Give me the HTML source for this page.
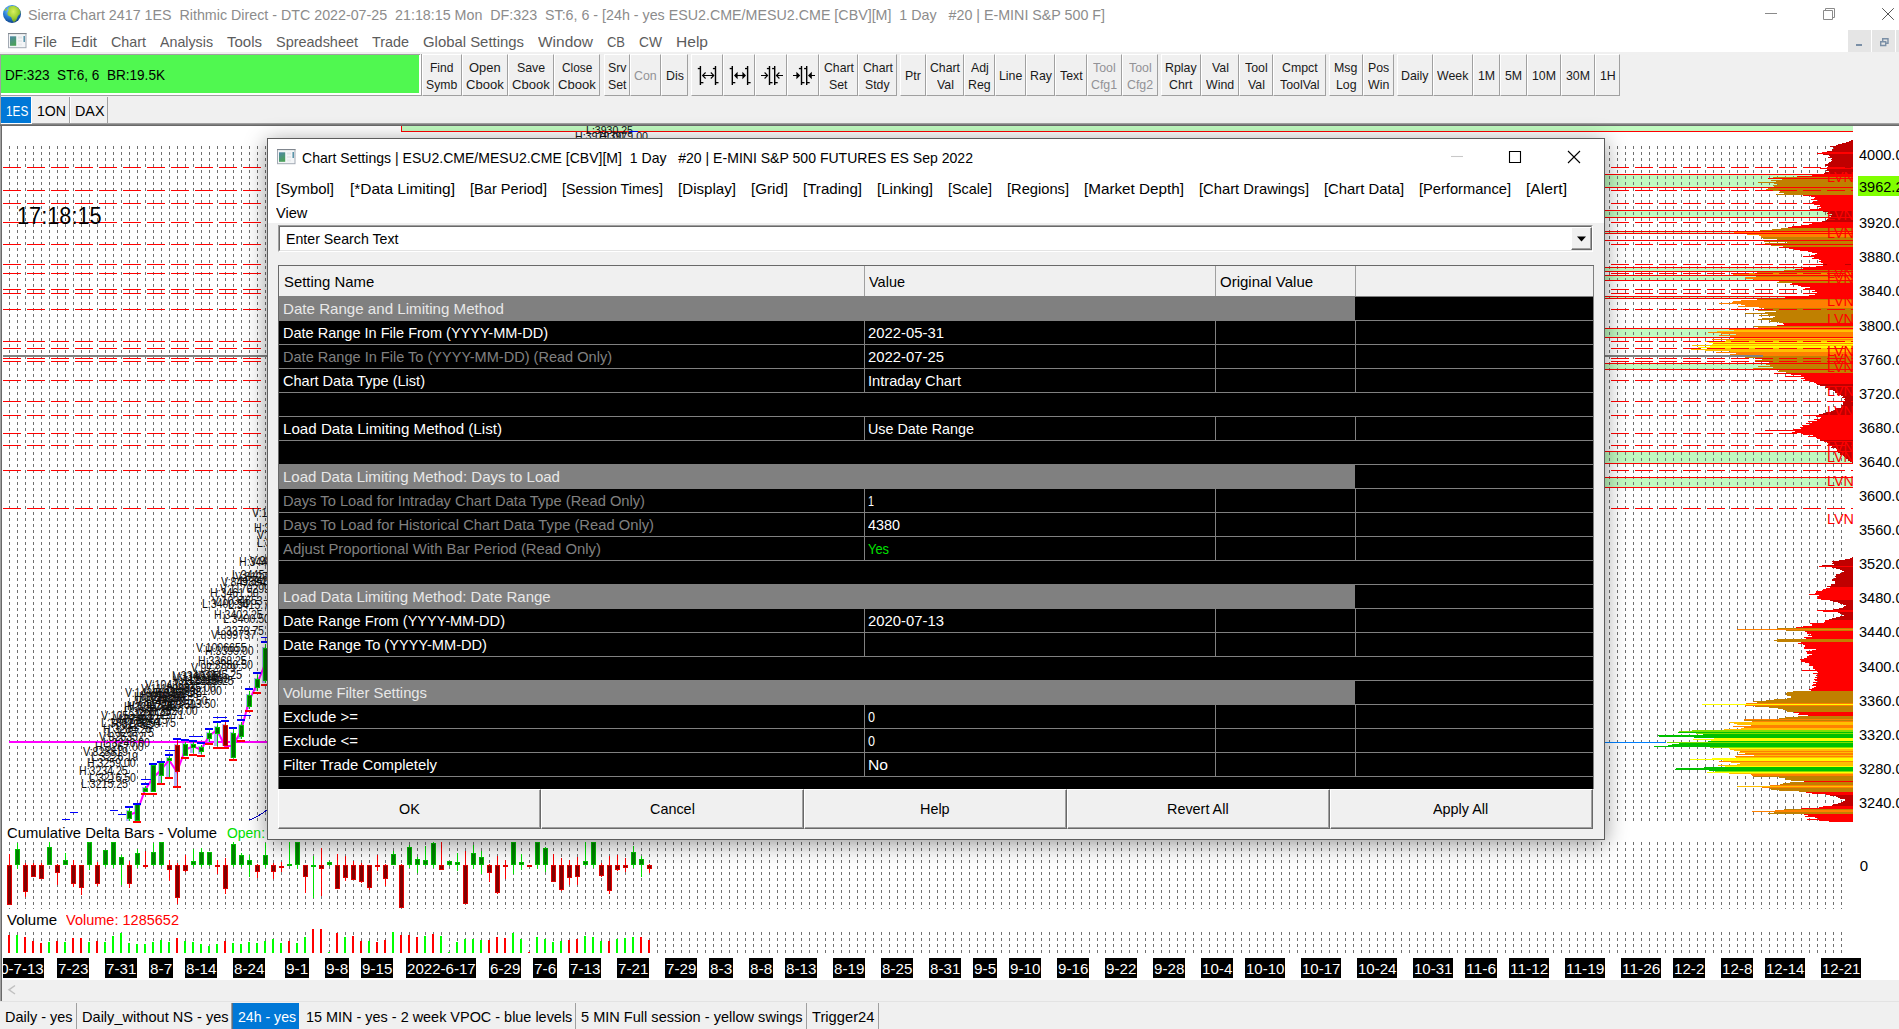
<!DOCTYPE html>
<html><head><meta charset="utf-8"><title>Sierra Chart</title>
<style>
html,body{margin:0;padding:0;}
body{width:1899px;height:1029px;overflow:hidden;position:relative;background:#fff;font-family:"Liberation Sans",sans-serif;}
div,span.t,svg{position:absolute;}
span.t{white-space:pre;line-height:1;transform-origin:0 0;}
.btn{background:#f0f0f0;border-left:1px solid #fff;border-top:1px solid #fff;border-right:1px solid #a0a0a0;border-bottom:1px solid #a0a0a0;box-sizing:border-box;}
</style></head><body>
<div style="left:0px;top:0px;width:1899px;height:27px;background:#fff;"></div>
<svg style="left:2px;top:4px" width="20" height="20" viewBox="0 0 20 20"><defs><radialGradient id="gl" cx="40%" cy="30%" r="75%"><stop offset="0" stop-color="#8fd0ff"/><stop offset="0.5" stop-color="#2a80d8"/><stop offset="1" stop-color="#0c3c80"/></radialGradient><radialGradient id="gl2" cx="45%" cy="35%" r="70%"><stop offset="0" stop-color="#d8f060"/><stop offset="0.6" stop-color="#9ccc30"/><stop offset="1" stop-color="#5a9020"/></radialGradient><clipPath id="gc"><circle cx="10" cy="10" r="9"/></clipPath></defs><circle cx="10" cy="10" r="9" fill="url(#gl)"/><g clip-path="url(#gc)"><path d="M7 3 C9 1.5 13 1.5 15 3 C17 4 19 7 18.5 9 C18 11 16 11 15.5 13 C15 15 14 17.5 12 18 C10.5 18 10 15.5 9.5 14 C9 12 6 12.5 5.5 10.5 C5 8.5 6 8 6.5 6.5 C6.8 5.5 6 4 7 3Z" fill="url(#gl2)"/><path d="M3 5 C4 4 5 4.5 5 5.5 C4.8 6.5 3.5 7 2.5 6.5Z" fill="#9ccc30"/></g></svg>
<span class="t" style="left:27.80px;top:7px;font-size:15px;color:#8c8c8c;transform:scaleX(0.9511);">Sierra Chart 2417 1ES  Rithmic Direct - DTC 2022-07-25  21:18:15 Mon  DF:323  ST:6, 6 - [24h - yes ESU2.CME/MESU2.CME [CBV][M]  1 Day   #20 | E-MINI S&amp;P 500 F]</span>
<svg style="left:1750px;top:0" width="149" height="27" viewBox="0 0 149 27"><g stroke="#8a8a8a" stroke-width="1" fill="none"><path d="M15 13.5H27"/><path d="M73.5 10.5h9v9h-9z"/><path d="M75.5 10.5v-2h9v9h-2"/><path d="M132.2 8.2L143.8 19.8M143.8 8.2L132.2 19.8" stroke="#555" stroke-width="1"/></g></svg>
<div style="left:0px;top:27px;width:1899px;height:25px;background:#fff;"></div>
<svg style="left:8px;top:33px" width="19" height="16" viewBox="0 0 19 16"><defs><linearGradient id="wia" x1="0" y1="0" x2="0.4" y2="1"><stop offset="0" stop-color="#4f86a8"/><stop offset="1" stop-color="#4ba05a"/></linearGradient></defs><rect x="0.5" y="0.5" width="17.5" height="14.2" fill="#f3f5f7" stroke="#a3aab4"/><rect x="0" y="0" width="18.5" height="1.1" fill="#80868e"/><rect x="2" y="3.3" width="6.2" height="9.5" fill="url(#wia)"/><rect x="10" y="3.5" width="4" height="2" fill="#e2e5e8"/><rect x="10" y="7" width="4" height="2" fill="#e6e8ea"/><rect x="10" y="10.5" width="4" height="2" fill="#e9ebed"/><rect x="15.5" y="3" width="1.4" height="6" fill="#4a8aa0"/></svg>
<span class="t" style="left:34.00px;top:34px;font-size:15px;color:#5c5c5c;transform:scaleX(0.9515);">File</span>
<span class="t" style="left:71.00px;top:34px;font-size:15px;color:#5c5c5c;transform:scaleX(1.0059);">Edit</span>
<span class="t" style="left:111.00px;top:34px;font-size:15px;color:#5c5c5c;transform:scaleX(0.9542);">Chart</span>
<span class="t" style="left:160.00px;top:34px;font-size:15px;color:#5c5c5c;transform:scaleX(0.9489);">Analysis</span>
<span class="t" style="left:227.00px;top:34px;font-size:15px;color:#5c5c5c;">Tools</span>
<span class="t" style="left:276.00px;top:34px;font-size:15px;color:#5c5c5c;transform:scaleX(0.9640);">Spreadsheet</span>
<span class="t" style="left:372.00px;top:34px;font-size:15px;color:#5c5c5c;transform:scaleX(0.9578);">Trade</span>
<span class="t" style="left:423.00px;top:34px;font-size:15px;color:#5c5c5c;transform:scaleX(0.9928);">Global Settings</span>
<span class="t" style="left:538.00px;top:34px;font-size:15px;color:#5c5c5c;transform:scaleX(1.0309);">Window</span>
<span class="t" style="left:607.00px;top:34px;font-size:15px;color:#5c5c5c;transform:scaleX(0.8638);">CB</span>
<span class="t" style="left:639.00px;top:34px;font-size:15px;color:#5c5c5c;transform:scaleX(0.9204);">CW</span>
<span class="t" style="left:676.00px;top:34px;font-size:15px;color:#5c5c5c;transform:scaleX(1.0373);">Help</span>
<div style="left:1848px;top:30px;width:23px;height:23px;background:#e5e5e5;"></div>
<div style="left:1872px;top:30px;width:23px;height:23px;background:#e5e5e5;"></div>
<div style="left:1896px;top:30px;width:3px;height:23px;background:#e5e5e5;"></div>
<svg style="left:1848px;top:30px" width="51" height="23" viewBox="0 0 51 23"><g fill="#7a8fa6"><rect x="8" y="14" width="6" height="2"/></g><g stroke="#7a8fa6" stroke-width="1.4" fill="none"><path d="M32.7 11.7h5v3.8h-5z"/><path d="M34.7 11.5v-2.8h5.3v4.6h-2"/></g></svg>
<div style="left:0px;top:52px;width:1899px;height:73px;background:#f0f0f0;"></div>
<div style="left:0px;top:54px;width:420px;height:1px;background:#a0a0a0;"></div>
<div style="left:0px;top:54px;width:1px;height:42px;background:#a0a0a0;"></div>
<div style="left:1px;top:55px;width:418px;height:38px;background:#50f850;"></div>
<div style="left:1px;top:93px;width:419px;height:2px;background:#fff;"></div>
<div style="left:419px;top:55px;width:2px;height:40px;background:#fff;"></div>
<div style="left:0px;top:95px;width:421px;height:1px;background:#a0a0a0;"></div>
<div style="left:421px;top:54px;width:1px;height:42px;background:#a0a0a0;"></div>
<span class="t" style="left:5.00px;top:67px;font-size:15px;color:#000;transform:scaleX(0.9052);">DF:323  ST:6, 6  BR:19.5K</span>
<div class="btn" style="left:422px;top:54px;width:40px;height:42px"></div>
<span class="t" style="left:430.30px;top:61px;font-size:13px;color:#1a1a1a;transform:scaleX(0.9253);">Find</span>
<span class="t" style="left:426.40px;top:78px;font-size:13px;color:#1a1a1a;transform:scaleX(0.9389);">Symb</span>
<div class="btn" style="left:462px;top:54px;width:46px;height:42px"></div>
<span class="t" style="left:469.20px;top:61px;font-size:13px;color:#1a1a1a;transform:scaleX(0.9936);">Open</span>
<span class="t" style="left:466.10px;top:78px;font-size:13px;color:#1a1a1a;transform:scaleX(1.0059);">Cbook</span>
<div class="btn" style="left:508px;top:54px;width:46px;height:42px"></div>
<span class="t" style="left:516.92px;top:61px;font-size:13px;color:#1a1a1a;transform:scaleX(0.9500);">Save</span>
<span class="t" style="left:512.10px;top:78px;font-size:13px;color:#1a1a1a;transform:scaleX(1.0059);">Cbook</span>
<div class="btn" style="left:554px;top:54px;width:46px;height:42px"></div>
<span class="t" style="left:561.85px;top:61px;font-size:13px;color:#1a1a1a;transform:scaleX(0.9116);">Close</span>
<span class="t" style="left:558.10px;top:78px;font-size:13px;color:#1a1a1a;transform:scaleX(1.0059);">Cbook</span>
<div class="btn" style="left:604px;top:54px;width:26px;height:42px"></div>
<span class="t" style="left:607.74px;top:61px;font-size:13px;color:#1a1a1a;transform:scaleX(0.9500);">Srv</span>
<span class="t" style="left:607.73px;top:78px;font-size:13px;color:#1a1a1a;transform:scaleX(0.9500);">Set</span>
<div class="btn" style="left:630px;top:54px;width:31px;height:42px"></div>
<span class="t" style="left:634.17px;top:69px;font-size:13px;color:#929296;transform:scaleX(0.9500);">Con</span>
<div class="btn" style="left:661px;top:54px;width:27px;height:42px"></div>
<span class="t" style="left:665.58px;top:69px;font-size:13px;color:#1a1a1a;transform:scaleX(0.9500);">Dis</span>
<div class="btn" style="left:691px;top:54px;width:32px;height:42px"></div>
<div class="btn" style="left:723px;top:54px;width:32px;height:42px"></div>
<div class="btn" style="left:755px;top:54px;width:32px;height:42px"></div>
<div class="btn" style="left:787px;top:54px;width:32px;height:42px"></div>
<div class="btn" style="left:819px;top:54px;width:39px;height:42px"></div>
<span class="t" style="left:823.50px;top:61px;font-size:13px;color:#1a1a1a;transform:scaleX(0.9437);">Chart</span>
<span class="t" style="left:829.23px;top:78px;font-size:13px;color:#1a1a1a;transform:scaleX(0.9500);">Set</span>
<div class="btn" style="left:858px;top:54px;width:39px;height:42px"></div>
<span class="t" style="left:862.50px;top:61px;font-size:13px;color:#1a1a1a;transform:scaleX(0.9437);">Chart</span>
<span class="t" style="left:865.25px;top:78px;font-size:13px;color:#1a1a1a;transform:scaleX(0.9418);">Stdy</span>
<div class="btn" style="left:900px;top:54px;width:26px;height:42px"></div>
<span class="t" style="left:905.11px;top:69px;font-size:13px;color:#1a1a1a;transform:scaleX(0.9500);">Ptr</span>
<div class="btn" style="left:926px;top:54px;width:38px;height:42px"></div>
<span class="t" style="left:930.00px;top:61px;font-size:13px;color:#1a1a1a;transform:scaleX(0.9437);">Chart</span>
<span class="t" style="left:936.53px;top:78px;font-size:13px;color:#1a1a1a;transform:scaleX(0.9500);">Val</span>
<div class="btn" style="left:964px;top:54px;width:31px;height:42px"></div>
<span class="t" style="left:970.57px;top:61px;font-size:13px;color:#1a1a1a;transform:scaleX(0.9500);">Adj</span>
<span class="t" style="left:968.17px;top:78px;font-size:13px;color:#1a1a1a;transform:scaleX(0.9500);">Reg</span>
<div class="btn" style="left:995px;top:54px;width:31px;height:42px"></div>
<span class="t" style="left:998.82px;top:69px;font-size:13px;color:#1a1a1a;transform:scaleX(0.9500);">Line</span>
<div class="btn" style="left:1026px;top:54px;width:29px;height:42px"></div>
<span class="t" style="left:1029.52px;top:69px;font-size:13px;color:#1a1a1a;transform:scaleX(0.9500);">Ray</span>
<div class="btn" style="left:1055px;top:54px;width:32px;height:42px"></div>
<span class="t" style="left:1059.68px;top:69px;font-size:13px;color:#1a1a1a;transform:scaleX(0.9500);">Text</span>
<div class="btn" style="left:1087px;top:54px;width:35px;height:42px"></div>
<span class="t" style="left:1093.17px;top:61px;font-size:13px;color:#929296;transform:scaleX(0.9500);">Tool</span>
<span class="t" style="left:1091.46px;top:78px;font-size:13px;color:#929296;transform:scaleX(0.9500);">Cfg1</span>
<div class="btn" style="left:1122px;top:54px;width:36px;height:42px"></div>
<span class="t" style="left:1128.67px;top:61px;font-size:13px;color:#929296;transform:scaleX(0.9500);">Tool</span>
<span class="t" style="left:1126.96px;top:78px;font-size:13px;color:#929296;transform:scaleX(0.9500);">Cfg2</span>
<div class="btn" style="left:1161px;top:54px;width:40px;height:42px"></div>
<span class="t" style="left:1165.21px;top:61px;font-size:13px;color:#1a1a1a;transform:scaleX(0.9500);">Rplay</span>
<span class="t" style="left:1169.33px;top:78px;font-size:13px;color:#1a1a1a;transform:scaleX(0.9500);">Chrt</span>
<div class="btn" style="left:1201px;top:54px;width:38px;height:42px"></div>
<span class="t" style="left:1211.53px;top:61px;font-size:13px;color:#1a1a1a;transform:scaleX(0.9500);">Val</span>
<span class="t" style="left:1205.93px;top:78px;font-size:13px;color:#1a1a1a;transform:scaleX(0.9500);">Wind</span>
<div class="btn" style="left:1239px;top:54px;width:34px;height:42px"></div>
<span class="t" style="left:1244.67px;top:61px;font-size:13px;color:#1a1a1a;transform:scaleX(0.9500);">Tool</span>
<span class="t" style="left:1247.53px;top:78px;font-size:13px;color:#1a1a1a;transform:scaleX(0.9500);">Val</span>
<div class="btn" style="left:1273px;top:54px;width:53px;height:42px"></div>
<span class="t" style="left:1281.66px;top:61px;font-size:13px;color:#1a1a1a;transform:scaleX(0.9500);">Cmpct</span>
<span class="t" style="left:1279.70px;top:78px;font-size:13px;color:#1a1a1a;transform:scaleX(0.9500);">ToolVal</span>
<div class="btn" style="left:1329px;top:54px;width:34px;height:42px"></div>
<span class="t" style="left:1334.33px;top:61px;font-size:13px;color:#1a1a1a;transform:scaleX(0.9500);">Msg</span>
<span class="t" style="left:1335.70px;top:78px;font-size:13px;color:#1a1a1a;transform:scaleX(0.9500);">Log</span>
<div class="btn" style="left:1363px;top:54px;width:31px;height:42px"></div>
<span class="t" style="left:1367.86px;top:61px;font-size:13px;color:#1a1a1a;transform:scaleX(0.9500);">Pos</span>
<span class="t" style="left:1367.87px;top:78px;font-size:13px;color:#1a1a1a;transform:scaleX(0.9500);">Win</span>
<div class="btn" style="left:1397px;top:54px;width:36px;height:42px"></div>
<span class="t" style="left:1401.27px;top:69px;font-size:13px;color:#1a1a1a;transform:scaleX(0.9500);">Daily</span>
<div class="btn" style="left:1433px;top:54px;width:40px;height:42px"></div>
<span class="t" style="left:1437.33px;top:69px;font-size:13px;color:#1a1a1a;transform:scaleX(0.9500);">Week</span>
<div class="btn" style="left:1473px;top:54px;width:27px;height:42px"></div>
<span class="t" style="left:1477.92px;top:69px;font-size:13px;color:#1a1a1a;transform:scaleX(0.9500);">1M</span>
<div class="btn" style="left:1500px;top:54px;width:27px;height:42px"></div>
<span class="t" style="left:1504.92px;top:69px;font-size:13px;color:#1a1a1a;transform:scaleX(0.9500);">5M</span>
<div class="btn" style="left:1527px;top:54px;width:34px;height:42px"></div>
<span class="t" style="left:1531.99px;top:69px;font-size:13px;color:#1a1a1a;transform:scaleX(0.9500);">10M</span>
<div class="btn" style="left:1561px;top:54px;width:34px;height:42px"></div>
<span class="t" style="left:1565.99px;top:69px;font-size:13px;color:#1a1a1a;transform:scaleX(0.9500);">30M</span>
<div class="btn" style="left:1595px;top:54px;width:25px;height:42px"></div>
<span class="t" style="left:1599.61px;top:69px;font-size:13px;color:#1a1a1a;transform:scaleX(0.9500);">1H</span>
<svg style="left:0;top:0" width="1899" height="100" viewBox="0 0 1899 100"><g fill="#000" stroke="none"><rect x="699.70" y="66" width="1.4" height="19"/><rect x="697.80" y="67.9" width="2.6" height="1.3"/><rect x="700.40" y="82" width="3" height="1.3"/><rect x="714.80" y="66" width="1.4" height="19"/><rect x="712.90" y="67.9" width="2.6" height="1.3"/><rect x="715.50" y="82" width="3" height="1.3"/><rect x="731.60" y="66" width="1.4" height="19"/><rect x="729.70" y="67.9" width="2.6" height="1.3"/><rect x="732.30" y="82" width="3" height="1.3"/><rect x="746.90" y="66" width="1.4" height="19"/><rect x="745.00" y="67.9" width="2.6" height="1.3"/><rect x="747.60" y="82" width="3" height="1.3"/><rect x="768.80" y="66" width="1.4" height="19"/><rect x="766.90" y="67.9" width="2.6" height="1.3"/><rect x="769.50" y="82" width="3" height="1.3"/><rect x="774.00" y="66" width="1.4" height="19"/><rect x="772.10" y="67.9" width="2.6" height="1.3"/><rect x="774.70" y="82" width="3" height="1.3"/><rect x="800.80" y="66" width="1.4" height="19"/><rect x="798.90" y="67.9" width="2.6" height="1.3"/><rect x="801.50" y="82" width="3" height="1.3"/><rect x="806.00" y="66" width="1.4" height="19"/><rect x="804.10" y="67.9" width="2.6" height="1.3"/><rect x="806.70" y="82" width="3" height="1.3"/></g><g stroke="#000" stroke-width="1.1" fill="none"><path d="M702.6 75.5H713.8M705.6 72.5l-3 3 3 3M710.8 72.5l3 3-3 3"/><path d="M736 75.5H744"/><path d="M761 75.5H767.6M764.6 72.5l3 3-3 3"/><path d="M776.4 75.5H783M779.4 72.5l-3 3 3 3"/><path d="M793 75.5H797M811 75.5H815"/></g><g fill="#000"><path d="M734 75.5l3.6-3.8v7.6zM746 75.5l-3.6-3.8v7.6z"/><path d="M800.2 75.5l-3.8-3.8v7.6zM808 75.5l3.8-3.8v7.6z"/></g></svg>
<div style="left:0px;top:96px;width:1px;height:30px;background:#a0a0a0;"></div>
<div style="left:1px;top:97px;width:30px;height:26px;background:#0078d7;"></div>
<span class="t" style="left:5.50px;top:103px;font-size:15.5px;color:#fff;transform:scaleX(0.7611);">1ES</span>
<div style="left:31px;top:97px;width:1px;height:26px;background:#fff;"></div>
<div style="left:32px;top:97px;width:38px;height:26px;background:#f0f0f0;border-right:1px solid #a0a0a0;box-sizing:border-box;"></div>
<span class="t" style="left:37.00px;top:103px;font-size:15.5px;color:#000;transform:scaleX(0.9099);">1ON</span>
<div style="left:70px;top:97px;width:1px;height:26px;background:#fff;"></div>
<div style="left:71px;top:97px;width:37px;height:26px;background:#f0f0f0;border-right:1px solid #a0a0a0;box-sizing:border-box;"></div>
<span class="t" style="left:74.50px;top:103px;font-size:15.5px;color:#000;transform:scaleX(0.9256);">DAX</span>
<div style="left:1px;top:123px;width:31px;height:1px;background:#fff;"></div>
<div style="left:32px;top:123px;width:1867px;height:1px;background:#a0a0a0;"></div>
<div style="left:0px;top:124px;width:1899px;height:1px;background:#808080;"></div>
<div style="left:0px;top:125px;width:1899px;height:1px;background:#696969;"></div>
<div style="left:0px;top:126px;width:1px;height:875px;background:#a0a0a0;"></div>
<div style="left:1px;top:126px;width:1px;height:855px;background:#696969;"></div>
<svg style="left:0;top:0" width="1899" height="1029" viewBox="0 0 1899 1029" shape-rendering="crispEdges"><defs><pattern id="vd" x="9" y="146" width="8" height="6" patternUnits="userSpaceOnUse"><rect x="0" y="0" width="1" height="3" fill="#707070"/></pattern><pattern id="hd" x="3" y="0" width="24" height="1" patternUnits="userSpaceOnUse"><rect x="0" y="0" width="18" height="1" fill="#ff0000"/></pattern></defs><rect x="401" y="126" width="1452" height="5" fill="#c0fac0"/><rect x="401" y="131" width="1452" height="1" fill="#f00"/><rect x="401" y="126" width="1" height="6" fill="#f00"/><rect x="900" y="175" width="953" height="12" fill="#c0fac0"/><rect x="900" y="211" width="953" height="6" fill="#c0fac0"/><rect x="900" y="232" width="953" height="1" fill="#c0fac0"/><rect x="900" y="268" width="953" height="3" fill="#c0fac0"/><rect x="900" y="276" width="953" height="4" fill="#c0fac0"/><rect x="900" y="297" width="953" height="1" fill="#c0fac0"/><rect x="900" y="329" width="953" height="8" fill="#c0fac0"/><rect x="900" y="364" width="953" height="5" fill="#c0fac0"/><rect x="900" y="452" width="953" height="11" fill="#c0fac0"/><rect x="900" y="478" width="953" height="9" fill="#c0fac0"/><rect x="9" y="146" width="1833" height="675" fill="url(#vd)"/><rect x="9" y="842" width="1833" height="67" fill="url(#vd)"/><rect x="9" y="932" width="1833" height="21" fill="url(#vd)"/><rect x="1851" y="140" width="2" height="1" fill="#c00000"/><rect x="1849" y="141" width="4" height="1" fill="#c00000"/><rect x="1846" y="142" width="7" height="1" fill="#c00000"/><rect x="1842" y="143" width="11" height="1" fill="#c00000"/><rect x="1838" y="144" width="15" height="1" fill="#c00000"/><rect x="1836" y="145" width="17" height="1" fill="#c00000"/><rect x="1830" y="146" width="23" height="1" fill="#c00000"/><rect x="1833" y="147" width="20" height="1" fill="#c00000"/><rect x="1834" y="148" width="19" height="1" fill="#c00000"/><rect x="1832" y="149" width="21" height="1" fill="#c00000"/><rect x="1832" y="150" width="21" height="1" fill="#c00000"/><rect x="1827" y="151" width="26" height="1" fill="#c00000"/><rect x="1822" y="152" width="31" height="1" fill="#ff0000"/><rect x="1817" y="153" width="36" height="1" fill="#ff0000"/><rect x="1823" y="154" width="30" height="1" fill="#c00000"/><rect x="1829" y="155" width="24" height="1" fill="#c00000"/><rect x="1830" y="156" width="23" height="1" fill="#c00000"/><rect x="1828" y="157" width="25" height="1" fill="#c00000"/><rect x="1832" y="158" width="21" height="1" fill="#c00000"/><rect x="1831" y="159" width="22" height="1" fill="#c00000"/><rect x="1832" y="160" width="21" height="1" fill="#c00000"/><rect x="1831" y="161" width="22" height="1" fill="#c00000"/><rect x="1829" y="162" width="24" height="1" fill="#c00000"/><rect x="1828" y="163" width="25" height="1" fill="#c00000"/><rect x="1825" y="164" width="28" height="1" fill="#c00000"/><rect x="1825" y="165" width="28" height="1" fill="#c00000"/><rect x="1828" y="166" width="25" height="1" fill="#c00000"/><rect x="1827" y="167" width="26" height="1" fill="#c00000"/><rect x="1820" y="168" width="33" height="1" fill="#ff0000"/><rect x="1827" y="169" width="26" height="1" fill="#c00000"/><rect x="1826" y="170" width="27" height="1" fill="#c00000"/><rect x="1829" y="171" width="24" height="1" fill="#c00000"/><rect x="1825" y="172" width="28" height="1" fill="#c00000"/><rect x="1824" y="173" width="29" height="1" fill="#c00000"/><rect x="1816" y="174" width="37" height="1" fill="#ff0000"/><rect x="1812" y="175" width="41" height="1" fill="#ff0000"/><rect x="1797" y="176" width="56" height="1" fill="#ff0000"/><rect x="1773" y="177" width="80" height="1" fill="#c08000"/><rect x="1768" y="178" width="85" height="1" fill="#ff0000"/><rect x="1782" y="179" width="71" height="1" fill="#c08000"/><rect x="1771" y="180" width="82" height="1" fill="#c08000"/><rect x="1776" y="181" width="77" height="1" fill="#c08000"/><rect x="1758" y="182" width="95" height="1" fill="#c08000"/><rect x="1774" y="183" width="79" height="1" fill="#c08000"/><rect x="1778" y="184" width="75" height="1" fill="#c08000"/><rect x="1773" y="185" width="80" height="1" fill="#c08000"/><rect x="1774" y="186" width="79" height="1" fill="#c08000"/><rect x="1765" y="187" width="88" height="1" fill="#c08000"/><rect x="1768" y="188" width="85" height="1" fill="#c08000"/><rect x="1766" y="189" width="87" height="1" fill="#c08000"/><rect x="1771" y="190" width="82" height="1" fill="#c08000"/><rect x="1780" y="191" width="73" height="1" fill="#c08000"/><rect x="1779" y="192" width="74" height="1" fill="#c08000"/><rect x="1784" y="193" width="69" height="1" fill="#c08000"/><rect x="1776" y="194" width="77" height="1" fill="#c08000"/><rect x="1803" y="195" width="50" height="1" fill="#ff0000"/><rect x="1811" y="196" width="42" height="1" fill="#ff0000"/><rect x="1815" y="197" width="38" height="1" fill="#ff0000"/><rect x="1814" y="198" width="39" height="1" fill="#ff0000"/><rect x="1811" y="199" width="42" height="1" fill="#ff0000"/><rect x="1818" y="200" width="35" height="1" fill="#ff0000"/><rect x="1813" y="201" width="40" height="1" fill="#ff0000"/><rect x="1812" y="202" width="41" height="1" fill="#ff0000"/><rect x="1817" y="203" width="36" height="1" fill="#ff0000"/><rect x="1814" y="204" width="39" height="1" fill="#ff0000"/><rect x="1820" y="205" width="33" height="1" fill="#ff0000"/><rect x="1817" y="206" width="36" height="1" fill="#ff0000"/><rect x="1821" y="207" width="32" height="1" fill="#ff0000"/><rect x="1819" y="208" width="34" height="1" fill="#ff0000"/><rect x="1810" y="209" width="43" height="1" fill="#ff0000"/><rect x="1821" y="210" width="32" height="1" fill="#c00000"/><rect x="1823" y="211" width="30" height="1" fill="#c00000"/><rect x="1828" y="212" width="25" height="1" fill="#c00000"/><rect x="1827" y="213" width="26" height="1" fill="#c00000"/><rect x="1832" y="214" width="21" height="1" fill="#c00000"/><rect x="1829" y="215" width="24" height="1" fill="#c00000"/><rect x="1831" y="216" width="22" height="1" fill="#c00000"/><rect x="1829" y="217" width="24" height="1" fill="#c00000"/><rect x="1829" y="218" width="24" height="1" fill="#c00000"/><rect x="1827" y="219" width="26" height="1" fill="#c00000"/><rect x="1826" y="220" width="27" height="1" fill="#c00000"/><rect x="1822" y="221" width="31" height="1" fill="#c00000"/><rect x="1816" y="222" width="37" height="1" fill="#ff0000"/><rect x="1812" y="223" width="41" height="1" fill="#ff0000"/><rect x="1809" y="224" width="44" height="1" fill="#ff0000"/><rect x="1801" y="225" width="52" height="1" fill="#ff0000"/><rect x="1792" y="226" width="61" height="1" fill="#ff0000"/><rect x="1788" y="227" width="65" height="1" fill="#ff0000"/><rect x="1781" y="228" width="72" height="1" fill="#c08000"/><rect x="1772" y="229" width="81" height="1" fill="#c08000"/><rect x="1760" y="230" width="93" height="1" fill="#c08000"/><rect x="1760" y="231" width="93" height="1" fill="#ff8000"/><rect x="1734" y="232" width="119" height="1" fill="#ff8000"/><rect x="1752" y="233" width="101" height="1" fill="#c08000"/><rect x="1747" y="234" width="106" height="1" fill="#ff8000"/><rect x="1759" y="235" width="94" height="1" fill="#ff8000"/><rect x="1761" y="236" width="92" height="1" fill="#ff8000"/><rect x="1761" y="237" width="92" height="1" fill="#c08000"/><rect x="1763" y="238" width="90" height="1" fill="#c08000"/><rect x="1777" y="239" width="76" height="1" fill="#c08000"/><rect x="1777" y="240" width="76" height="1" fill="#c08000"/><rect x="1764" y="241" width="89" height="1" fill="#c08000"/><rect x="1787" y="242" width="66" height="1" fill="#c08000"/><rect x="1765" y="243" width="88" height="1" fill="#c08000"/><rect x="1763" y="244" width="90" height="1" fill="#ff0000"/><rect x="1771" y="245" width="82" height="1" fill="#c08000"/><rect x="1783" y="246" width="70" height="1" fill="#c08000"/><rect x="1779" y="247" width="74" height="1" fill="#ff0000"/><rect x="1789" y="248" width="64" height="1" fill="#ff0000"/><rect x="1794" y="249" width="59" height="1" fill="#ff0000"/><rect x="1800" y="250" width="53" height="1" fill="#ff0000"/><rect x="1808" y="251" width="45" height="1" fill="#ff0000"/><rect x="1812" y="252" width="41" height="1" fill="#ff0000"/><rect x="1817" y="253" width="36" height="1" fill="#ff0000"/><rect x="1815" y="254" width="38" height="1" fill="#ff0000"/><rect x="1811" y="255" width="42" height="1" fill="#ff0000"/><rect x="1803" y="256" width="50" height="1" fill="#ff0000"/><rect x="1814" y="257" width="39" height="1" fill="#ff0000"/><rect x="1812" y="258" width="41" height="1" fill="#ff0000"/><rect x="1819" y="259" width="34" height="1" fill="#ff0000"/><rect x="1821" y="260" width="32" height="1" fill="#ff0000"/><rect x="1819" y="261" width="34" height="1" fill="#ff0000"/><rect x="1821" y="262" width="32" height="1" fill="#ff0000"/><rect x="1823" y="263" width="30" height="1" fill="#ff0000"/><rect x="1821" y="264" width="32" height="1" fill="#c00000"/><rect x="1823" y="265" width="30" height="1" fill="#ff0000"/><rect x="1816" y="266" width="37" height="1" fill="#ff0000"/><rect x="1803" y="267" width="50" height="1" fill="#ff0000"/><rect x="1803" y="268" width="50" height="1" fill="#ff0000"/><rect x="1795" y="269" width="58" height="1" fill="#ff0000"/><rect x="1784" y="270" width="69" height="1" fill="#c08000"/><rect x="1765" y="271" width="88" height="1" fill="#c08000"/><rect x="1757" y="272" width="96" height="1" fill="#c08000"/><rect x="1743" y="273" width="110" height="1" fill="#ff8000"/><rect x="1733" y="274" width="120" height="1" fill="#ff8000"/><rect x="1728" y="275" width="125" height="1" fill="#ff8000"/><rect x="1756" y="276" width="97" height="1" fill="#c08000"/><rect x="1745" y="277" width="108" height="1" fill="#ff8000"/><rect x="1746" y="278" width="107" height="1" fill="#ff8000"/><rect x="1754" y="279" width="99" height="1" fill="#ff8000"/><rect x="1768" y="280" width="85" height="1" fill="#c08000"/><rect x="1779" y="281" width="74" height="1" fill="#c08000"/><rect x="1777" y="282" width="76" height="1" fill="#c08000"/><rect x="1792" y="283" width="61" height="1" fill="#ff0000"/><rect x="1790" y="284" width="63" height="1" fill="#ff0000"/><rect x="1798" y="285" width="55" height="1" fill="#ff0000"/><rect x="1801" y="286" width="52" height="1" fill="#ff0000"/><rect x="1810" y="287" width="43" height="1" fill="#ff0000"/><rect x="1805" y="288" width="48" height="1" fill="#ff0000"/><rect x="1808" y="289" width="45" height="1" fill="#ff0000"/><rect x="1815" y="290" width="38" height="1" fill="#ff0000"/><rect x="1812" y="291" width="41" height="1" fill="#ff0000"/><rect x="1817" y="292" width="36" height="1" fill="#ff0000"/><rect x="1819" y="293" width="34" height="1" fill="#ff0000"/><rect x="1815" y="294" width="38" height="1" fill="#ff0000"/><rect x="1809" y="295" width="44" height="1" fill="#ff0000"/><rect x="1798" y="296" width="55" height="1" fill="#ff0000"/><rect x="1785" y="297" width="68" height="1" fill="#ff0000"/><rect x="1761" y="298" width="92" height="1" fill="#c08000"/><rect x="1757" y="299" width="96" height="1" fill="#c08000"/><rect x="1741" y="300" width="112" height="1" fill="#ff8000"/><rect x="1733" y="301" width="120" height="1" fill="#ff8000"/><rect x="1732" y="302" width="121" height="1" fill="#ff8000"/><rect x="1719" y="303" width="134" height="1" fill="#ff8000"/><rect x="1741" y="304" width="112" height="1" fill="#ff8000"/><rect x="1745" y="305" width="108" height="1" fill="#ff8000"/><rect x="1738" y="306" width="115" height="1" fill="#ff8000"/><rect x="1759" y="307" width="94" height="1" fill="#ff8000"/><rect x="1764" y="308" width="89" height="1" fill="#c08000"/><rect x="1755" y="309" width="98" height="1" fill="#c08000"/><rect x="1758" y="310" width="95" height="1" fill="#c08000"/><rect x="1776" y="311" width="77" height="1" fill="#c08000"/><rect x="1765" y="312" width="88" height="1" fill="#c08000"/><rect x="1745" y="313" width="108" height="1" fill="#c08000"/><rect x="1768" y="314" width="85" height="1" fill="#c08000"/><rect x="1759" y="315" width="94" height="1" fill="#c08000"/><rect x="1775" y="316" width="78" height="1" fill="#c08000"/><rect x="1773" y="317" width="80" height="1" fill="#c08000"/><rect x="1762" y="318" width="91" height="1" fill="#c08000"/><rect x="1758" y="319" width="95" height="1" fill="#c08000"/><rect x="1771" y="320" width="82" height="1" fill="#c08000"/><rect x="1769" y="321" width="84" height="1" fill="#c08000"/><rect x="1779" y="322" width="74" height="1" fill="#c08000"/><rect x="1783" y="323" width="70" height="1" fill="#ff0000"/><rect x="1784" y="324" width="69" height="1" fill="#ff0000"/><rect x="1777" y="325" width="76" height="1" fill="#ff0000"/><rect x="1754" y="326" width="99" height="1" fill="#c08000"/><rect x="1758" y="327" width="95" height="1" fill="#ff8000"/><rect x="1743" y="328" width="110" height="1" fill="#ff8000"/><rect x="1729" y="329" width="124" height="1" fill="#ff8000"/><rect x="1734" y="330" width="119" height="1" fill="#ffc000"/><rect x="1717" y="331" width="136" height="1" fill="#ffc000"/><rect x="1708" y="332" width="145" height="1" fill="#ff8000"/><rect x="1721" y="333" width="132" height="1" fill="#ff8000"/><rect x="1736" y="334" width="117" height="1" fill="#ff8000"/><rect x="1719" y="335" width="134" height="1" fill="#ff8000"/><rect x="1730" y="336" width="123" height="1" fill="#ff8000"/><rect x="1720" y="337" width="133" height="1" fill="#ffc000"/><rect x="1734" y="338" width="119" height="1" fill="#ffc000"/><rect x="1712" y="339" width="141" height="1" fill="#ff8000"/><rect x="1726" y="340" width="127" height="1" fill="#ffc000"/><rect x="1705" y="341" width="148" height="1" fill="#ffc000"/><rect x="1709" y="342" width="144" height="1" fill="#ffff00"/><rect x="1713" y="343" width="140" height="1" fill="#ff8000"/><rect x="1712" y="344" width="141" height="1" fill="#ffff00"/><rect x="1692" y="345" width="161" height="1" fill="#ffc000"/><rect x="1710" y="346" width="143" height="1" fill="#ffff00"/><rect x="1698" y="347" width="155" height="1" fill="#ffff00"/><rect x="1707" y="348" width="146" height="1" fill="#ffc000"/><rect x="1691" y="349" width="162" height="1" fill="#ffc000"/><rect x="1705" y="350" width="148" height="1" fill="#ffc000"/><rect x="1730" y="351" width="123" height="1" fill="#ffc000"/><rect x="1716" y="352" width="137" height="1" fill="#ff8000"/><rect x="1736" y="353" width="117" height="1" fill="#ff8000"/><rect x="1730" y="354" width="123" height="1" fill="#ff8000"/><rect x="1737" y="355" width="116" height="1" fill="#ff8000"/><rect x="1752" y="356" width="101" height="1" fill="#c08000"/><rect x="1745" y="357" width="108" height="1" fill="#c08000"/><rect x="1768" y="358" width="85" height="1" fill="#c08000"/><rect x="1762" y="359" width="91" height="1" fill="#c08000"/><rect x="1755" y="360" width="98" height="1" fill="#c08000"/><rect x="1769" y="361" width="84" height="1" fill="#c08000"/><rect x="1770" y="362" width="83" height="1" fill="#c08000"/><rect x="1764" y="363" width="89" height="1" fill="#c08000"/><rect x="1766" y="364" width="87" height="1" fill="#c08000"/><rect x="1770" y="365" width="83" height="1" fill="#c08000"/><rect x="1758" y="366" width="95" height="1" fill="#c08000"/><rect x="1773" y="367" width="80" height="1" fill="#c08000"/><rect x="1753" y="368" width="100" height="1" fill="#c08000"/><rect x="1761" y="369" width="92" height="1" fill="#c08000"/><rect x="1779" y="370" width="74" height="1" fill="#c08000"/><rect x="1778" y="371" width="75" height="1" fill="#c08000"/><rect x="1786" y="372" width="67" height="1" fill="#c08000"/><rect x="1774" y="373" width="79" height="1" fill="#ff0000"/><rect x="1791" y="374" width="62" height="1" fill="#ff0000"/><rect x="1801" y="375" width="52" height="1" fill="#ff0000"/><rect x="1785" y="376" width="68" height="1" fill="#ff0000"/><rect x="1804" y="377" width="49" height="1" fill="#ff0000"/><rect x="1801" y="378" width="52" height="1" fill="#ff0000"/><rect x="1805" y="379" width="48" height="1" fill="#ff0000"/><rect x="1804" y="380" width="49" height="1" fill="#ff0000"/><rect x="1810" y="381" width="43" height="1" fill="#ff0000"/><rect x="1814" y="382" width="39" height="1" fill="#ff0000"/><rect x="1816" y="383" width="37" height="1" fill="#ff0000"/><rect x="1817" y="384" width="36" height="1" fill="#c00000"/><rect x="1820" y="385" width="33" height="1" fill="#c00000"/><rect x="1826" y="386" width="27" height="1" fill="#ff0000"/><rect x="1825" y="387" width="28" height="1" fill="#c00000"/><rect x="1829" y="388" width="24" height="1" fill="#c00000"/><rect x="1828" y="389" width="25" height="1" fill="#c00000"/><rect x="1833" y="390" width="20" height="1" fill="#c00000"/><rect x="1835" y="391" width="18" height="1" fill="#c00000"/><rect x="1835" y="392" width="18" height="1" fill="#c00000"/><rect x="1838" y="393" width="15" height="1" fill="#c00000"/><rect x="1837" y="394" width="16" height="1" fill="#c00000"/><rect x="1841" y="395" width="12" height="1" fill="#c00000"/><rect x="1843" y="396" width="10" height="1" fill="#c00000"/><rect x="1842" y="397" width="11" height="1" fill="#c00000"/><rect x="1845" y="398" width="8" height="1" fill="#c00000"/><rect x="1844" y="399" width="9" height="1" fill="#c00000"/><rect x="1845" y="400" width="8" height="1" fill="#c00000"/><rect x="1844" y="401" width="9" height="1" fill="#c00000"/><rect x="1843" y="402" width="10" height="1" fill="#c00000"/><rect x="1843" y="403" width="10" height="1" fill="#c00000"/><rect x="1843" y="404" width="10" height="1" fill="#c00000"/><rect x="1841" y="405" width="12" height="1" fill="#c00000"/><rect x="1842" y="406" width="11" height="1" fill="#c00000"/><rect x="1841" y="407" width="12" height="1" fill="#c00000"/><rect x="1835" y="408" width="18" height="1" fill="#c00000"/><rect x="1835" y="409" width="18" height="1" fill="#c00000"/><rect x="1834" y="410" width="19" height="1" fill="#c00000"/><rect x="1831" y="411" width="22" height="1" fill="#c00000"/><rect x="1826" y="412" width="27" height="1" fill="#c00000"/><rect x="1823" y="413" width="30" height="1" fill="#c00000"/><rect x="1819" y="414" width="34" height="1" fill="#c00000"/><rect x="1814" y="415" width="39" height="1" fill="#ff0000"/><rect x="1816" y="416" width="37" height="1" fill="#ff0000"/><rect x="1821" y="417" width="32" height="1" fill="#ff0000"/><rect x="1820" y="418" width="33" height="1" fill="#ff0000"/><rect x="1814" y="419" width="39" height="1" fill="#ff0000"/><rect x="1817" y="420" width="36" height="1" fill="#ff0000"/><rect x="1808" y="421" width="45" height="1" fill="#ff0000"/><rect x="1812" y="422" width="41" height="1" fill="#ff0000"/><rect x="1806" y="423" width="47" height="1" fill="#ff0000"/><rect x="1810" y="424" width="43" height="1" fill="#ff0000"/><rect x="1802" y="425" width="51" height="1" fill="#ff0000"/><rect x="1803" y="426" width="50" height="1" fill="#ff0000"/><rect x="1800" y="427" width="53" height="1" fill="#ff0000"/><rect x="1801" y="428" width="52" height="1" fill="#ff0000"/><rect x="1793" y="429" width="60" height="1" fill="#ff0000"/><rect x="1765" y="430" width="88" height="1" fill="#ff0000"/><rect x="1795" y="431" width="58" height="1" fill="#ff0000"/><rect x="1792" y="432" width="61" height="1" fill="#ff0000"/><rect x="1801" y="433" width="52" height="1" fill="#ff0000"/><rect x="1803" y="434" width="50" height="1" fill="#ff0000"/><rect x="1813" y="435" width="40" height="1" fill="#ff0000"/><rect x="1808" y="436" width="45" height="1" fill="#ff0000"/><rect x="1816" y="437" width="37" height="1" fill="#ff0000"/><rect x="1817" y="438" width="36" height="1" fill="#ff0000"/><rect x="1820" y="439" width="33" height="1" fill="#ff0000"/><rect x="1820" y="440" width="33" height="1" fill="#c00000"/><rect x="1824" y="441" width="29" height="1" fill="#ff0000"/><rect x="1827" y="442" width="26" height="1" fill="#c00000"/><rect x="1829" y="443" width="24" height="1" fill="#c00000"/><rect x="1828" y="444" width="25" height="1" fill="#c00000"/><rect x="1831" y="445" width="22" height="1" fill="#c00000"/><rect x="1832" y="446" width="21" height="1" fill="#c00000"/><rect x="1831" y="447" width="22" height="1" fill="#c00000"/><rect x="1836" y="448" width="17" height="1" fill="#c00000"/><rect x="1837" y="449" width="16" height="1" fill="#c00000"/><rect x="1837" y="450" width="16" height="1" fill="#c00000"/><rect x="1839" y="451" width="14" height="1" fill="#c00000"/><rect x="1838" y="452" width="15" height="1" fill="#c00000"/><rect x="1840" y="453" width="13" height="1" fill="#c00000"/><rect x="1840" y="454" width="13" height="1" fill="#c00000"/><rect x="1843" y="455" width="10" height="1" fill="#c00000"/><rect x="1844" y="456" width="9" height="1" fill="#c00000"/><rect x="1845" y="457" width="8" height="1" fill="#c00000"/><rect x="1846" y="458" width="7" height="1" fill="#c00000"/><rect x="1848" y="459" width="5" height="1" fill="#c00000"/><rect x="1848" y="460" width="5" height="1" fill="#c00000"/><rect x="1850" y="461" width="3" height="1" fill="#c00000"/><rect x="1852" y="462" width="1" height="1" fill="#c00000"/><rect x="1852" y="557" width="1" height="1" fill="#c00000"/><rect x="1850" y="558" width="3" height="1" fill="#c00000"/><rect x="1845" y="559" width="8" height="1" fill="#c00000"/><rect x="1839" y="560" width="14" height="1" fill="#c00000"/><rect x="1832" y="561" width="21" height="1" fill="#c00000"/><rect x="1833" y="562" width="20" height="1" fill="#c00000"/><rect x="1832" y="563" width="21" height="1" fill="#c00000"/><rect x="1834" y="564" width="19" height="1" fill="#c00000"/><rect x="1822" y="565" width="31" height="1" fill="#c00000"/><rect x="1819" y="566" width="34" height="1" fill="#ff0000"/><rect x="1832" y="567" width="21" height="1" fill="#c00000"/><rect x="1836" y="568" width="17" height="1" fill="#c00000"/><rect x="1840" y="569" width="13" height="1" fill="#c00000"/><rect x="1842" y="570" width="11" height="1" fill="#c00000"/><rect x="1844" y="571" width="9" height="1" fill="#c00000"/><rect x="1842" y="572" width="11" height="1" fill="#c00000"/><rect x="1840" y="573" width="13" height="1" fill="#c00000"/><rect x="1836" y="574" width="17" height="1" fill="#c00000"/><rect x="1836" y="575" width="17" height="1" fill="#c00000"/><rect x="1835" y="576" width="18" height="1" fill="#c00000"/><rect x="1836" y="577" width="17" height="1" fill="#c00000"/><rect x="1834" y="578" width="19" height="1" fill="#c00000"/><rect x="1832" y="579" width="21" height="1" fill="#c00000"/><rect x="1832" y="580" width="21" height="1" fill="#c00000"/><rect x="1835" y="581" width="18" height="1" fill="#c00000"/><rect x="1835" y="582" width="18" height="1" fill="#c00000"/><rect x="1835" y="583" width="18" height="1" fill="#c00000"/><rect x="1831" y="584" width="22" height="1" fill="#c00000"/><rect x="1831" y="585" width="22" height="1" fill="#c00000"/><rect x="1827" y="586" width="26" height="1" fill="#c00000"/><rect x="1830" y="587" width="23" height="1" fill="#ff0000"/><rect x="1826" y="588" width="27" height="1" fill="#ff0000"/><rect x="1823" y="589" width="30" height="1" fill="#ff0000"/><rect x="1822" y="590" width="31" height="1" fill="#ff0000"/><rect x="1816" y="591" width="37" height="1" fill="#ff0000"/><rect x="1816" y="592" width="37" height="1" fill="#ff0000"/><rect x="1815" y="593" width="38" height="1" fill="#ff0000"/><rect x="1809" y="594" width="44" height="1" fill="#ff0000"/><rect x="1819" y="595" width="34" height="1" fill="#ff0000"/><rect x="1817" y="596" width="36" height="1" fill="#ff0000"/><rect x="1818" y="597" width="35" height="1" fill="#ff0000"/><rect x="1817" y="598" width="36" height="1" fill="#ff0000"/><rect x="1821" y="599" width="32" height="1" fill="#ff0000"/><rect x="1830" y="600" width="23" height="1" fill="#c00000"/><rect x="1833" y="601" width="20" height="1" fill="#c00000"/><rect x="1838" y="602" width="15" height="1" fill="#c00000"/><rect x="1840" y="603" width="13" height="1" fill="#c00000"/><rect x="1843" y="604" width="10" height="1" fill="#c00000"/><rect x="1846" y="605" width="7" height="1" fill="#c00000"/><rect x="1844" y="606" width="9" height="1" fill="#c00000"/><rect x="1843" y="607" width="10" height="1" fill="#c00000"/><rect x="1839" y="608" width="14" height="1" fill="#c00000"/><rect x="1833" y="609" width="20" height="1" fill="#c00000"/><rect x="1817" y="610" width="36" height="1" fill="#ff0000"/><rect x="1823" y="611" width="30" height="1" fill="#ff0000"/><rect x="1838" y="612" width="15" height="1" fill="#c00000"/><rect x="1840" y="613" width="13" height="1" fill="#c00000"/><rect x="1842" y="614" width="11" height="1" fill="#c00000"/><rect x="1844" y="615" width="9" height="1" fill="#c00000"/><rect x="1840" y="616" width="13" height="1" fill="#c00000"/><rect x="1836" y="617" width="17" height="1" fill="#c00000"/><rect x="1832" y="618" width="21" height="1" fill="#c00000"/><rect x="1829" y="619" width="24" height="1" fill="#c00000"/><rect x="1825" y="620" width="28" height="1" fill="#ff0000"/><rect x="1825" y="621" width="28" height="1" fill="#ff0000"/><rect x="1824" y="622" width="29" height="1" fill="#ff0000"/><rect x="1810" y="623" width="43" height="1" fill="#ff0000"/><rect x="1812" y="624" width="41" height="1" fill="#ff0000"/><rect x="1812" y="625" width="41" height="1" fill="#ff0000"/><rect x="1803" y="626" width="50" height="1" fill="#ff0000"/><rect x="1796" y="627" width="57" height="1" fill="#ff0000"/><rect x="1777" y="628" width="76" height="1" fill="#c08000"/><rect x="1737" y="629" width="116" height="1" fill="#ff8000"/><rect x="1786" y="630" width="67" height="1" fill="#c08000"/><rect x="1805" y="631" width="48" height="1" fill="#ff0000"/><rect x="1807" y="632" width="46" height="1" fill="#ff0000"/><rect x="1807" y="633" width="46" height="1" fill="#ff0000"/><rect x="1811" y="634" width="42" height="1" fill="#ff0000"/><rect x="1808" y="635" width="45" height="1" fill="#ff0000"/><rect x="1812" y="636" width="41" height="1" fill="#ff0000"/><rect x="1804" y="637" width="49" height="1" fill="#ff0000"/><rect x="1806" y="638" width="47" height="1" fill="#ff0000"/><rect x="1777" y="639" width="76" height="1" fill="#c08000"/><rect x="1774" y="640" width="79" height="1" fill="#c08000"/><rect x="1777" y="641" width="76" height="1" fill="#c08000"/><rect x="1801" y="642" width="52" height="1" fill="#ff0000"/><rect x="1798" y="643" width="55" height="1" fill="#ff0000"/><rect x="1803" y="644" width="50" height="1" fill="#ff0000"/><rect x="1805" y="645" width="48" height="1" fill="#ff0000"/><rect x="1805" y="646" width="48" height="1" fill="#ff0000"/><rect x="1804" y="647" width="49" height="1" fill="#ff0000"/><rect x="1804" y="648" width="49" height="1" fill="#ff0000"/><rect x="1816" y="649" width="37" height="1" fill="#ff0000"/><rect x="1812" y="650" width="41" height="1" fill="#ff0000"/><rect x="1806" y="651" width="47" height="1" fill="#ff0000"/><rect x="1807" y="652" width="46" height="1" fill="#ff0000"/><rect x="1807" y="653" width="46" height="1" fill="#ff0000"/><rect x="1812" y="654" width="41" height="1" fill="#ff0000"/><rect x="1809" y="655" width="44" height="1" fill="#ff0000"/><rect x="1807" y="656" width="46" height="1" fill="#ff0000"/><rect x="1807" y="657" width="46" height="1" fill="#ff0000"/><rect x="1804" y="658" width="49" height="1" fill="#ff0000"/><rect x="1800" y="659" width="53" height="1" fill="#ff0000"/><rect x="1801" y="660" width="52" height="1" fill="#ff0000"/><rect x="1801" y="661" width="52" height="1" fill="#ff0000"/><rect x="1805" y="662" width="48" height="1" fill="#ff0000"/><rect x="1809" y="663" width="44" height="1" fill="#ff0000"/><rect x="1810" y="664" width="43" height="1" fill="#ff0000"/><rect x="1809" y="665" width="44" height="1" fill="#ff0000"/><rect x="1813" y="666" width="40" height="1" fill="#ff0000"/><rect x="1813" y="667" width="40" height="1" fill="#ff0000"/><rect x="1813" y="668" width="40" height="1" fill="#ff0000"/><rect x="1815" y="669" width="38" height="1" fill="#ff0000"/><rect x="1802" y="670" width="51" height="1" fill="#ff0000"/><rect x="1817" y="671" width="36" height="1" fill="#ff0000"/><rect x="1818" y="672" width="35" height="1" fill="#ff0000"/><rect x="1813" y="673" width="40" height="1" fill="#ff0000"/><rect x="1818" y="674" width="35" height="1" fill="#ff0000"/><rect x="1816" y="675" width="37" height="1" fill="#ff0000"/><rect x="1818" y="676" width="35" height="1" fill="#ff0000"/><rect x="1815" y="677" width="38" height="1" fill="#ff0000"/><rect x="1817" y="678" width="36" height="1" fill="#ff0000"/><rect x="1814" y="679" width="39" height="1" fill="#ff0000"/><rect x="1815" y="680" width="38" height="1" fill="#ff0000"/><rect x="1818" y="681" width="35" height="1" fill="#ff0000"/><rect x="1813" y="682" width="40" height="1" fill="#ff0000"/><rect x="1816" y="683" width="37" height="1" fill="#ff0000"/><rect x="1813" y="684" width="40" height="1" fill="#ff0000"/><rect x="1812" y="685" width="41" height="1" fill="#ff0000"/><rect x="1816" y="686" width="37" height="1" fill="#ff0000"/><rect x="1814" y="687" width="39" height="1" fill="#ff0000"/><rect x="1812" y="688" width="41" height="1" fill="#ff0000"/><rect x="1809" y="689" width="44" height="1" fill="#ff0000"/><rect x="1811" y="690" width="42" height="1" fill="#ff0000"/><rect x="1793" y="691" width="60" height="1" fill="#c08000"/><rect x="1787" y="692" width="66" height="1" fill="#c08000"/><rect x="1786" y="693" width="67" height="1" fill="#c08000"/><rect x="1786" y="694" width="67" height="1" fill="#c08000"/><rect x="1787" y="695" width="66" height="1" fill="#c08000"/><rect x="1791" y="696" width="62" height="1" fill="#c08000"/><rect x="1791" y="697" width="62" height="1" fill="#c08000"/><rect x="1787" y="698" width="66" height="1" fill="#c08000"/><rect x="1774" y="699" width="79" height="1" fill="#c08000"/><rect x="1766" y="700" width="87" height="1" fill="#c08000"/><rect x="1753" y="701" width="100" height="1" fill="#c08000"/><rect x="1757" y="702" width="96" height="1" fill="#c08000"/><rect x="1746" y="703" width="107" height="1" fill="#ff8000"/><rect x="1702" y="704" width="151" height="1" fill="#ffff00"/><rect x="1745" y="705" width="108" height="1" fill="#ff8000"/><rect x="1755" y="706" width="98" height="1" fill="#c08000"/><rect x="1769" y="707" width="84" height="1" fill="#c08000"/><rect x="1778" y="708" width="75" height="1" fill="#c08000"/><rect x="1783" y="709" width="70" height="1" fill="#c08000"/><rect x="1786" y="710" width="67" height="1" fill="#c08000"/><rect x="1787" y="711" width="66" height="1" fill="#c08000"/><rect x="1794" y="712" width="59" height="1" fill="#ff0000"/><rect x="1799" y="713" width="54" height="1" fill="#ff0000"/><rect x="1798" y="714" width="55" height="1" fill="#ff0000"/><rect x="1808" y="715" width="45" height="1" fill="#ff0000"/><rect x="1798" y="716" width="55" height="1" fill="#c08000"/><rect x="1785" y="717" width="68" height="1" fill="#c08000"/><rect x="1779" y="718" width="74" height="1" fill="#c08000"/><rect x="1744" y="719" width="109" height="1" fill="#ff8000"/><rect x="1744" y="720" width="109" height="1" fill="#c08000"/><rect x="1752" y="721" width="101" height="1" fill="#ff8000"/><rect x="1729" y="722" width="124" height="1" fill="#ffc000"/><rect x="1734" y="723" width="119" height="1" fill="#ffc000"/><rect x="1737" y="724" width="116" height="1" fill="#ffc000"/><rect x="1751" y="725" width="102" height="1" fill="#ff8000"/><rect x="1733" y="726" width="120" height="1" fill="#ff8000"/><rect x="1744" y="727" width="109" height="1" fill="#ff8000"/><rect x="1741" y="728" width="112" height="1" fill="#ffc000"/><rect x="1724" y="729" width="129" height="1" fill="#ffc000"/><rect x="1692" y="730" width="161" height="1" fill="#80e000"/><rect x="1679" y="731" width="174" height="1" fill="#80e000"/><rect x="1678" y="732" width="175" height="1" fill="#00c000"/><rect x="1696" y="733" width="157" height="1" fill="#80e000"/><rect x="1703" y="734" width="150" height="1" fill="#00c000"/><rect x="1658" y="735" width="195" height="1" fill="#00c000"/><rect x="1659" y="736" width="194" height="1" fill="#00c000"/><rect x="1694" y="737" width="159" height="1" fill="#00c000"/><rect x="1714" y="738" width="139" height="1" fill="#ffff00"/><rect x="1693" y="739" width="160" height="1" fill="#ffff00"/><rect x="1711" y="740" width="142" height="1" fill="#ffff00"/><rect x="1708" y="741" width="145" height="1" fill="#00c000"/><rect x="1667" y="742" width="186" height="1" fill="#80e000"/><rect x="1679" y="743" width="174" height="1" fill="#00c000"/><rect x="1672" y="744" width="181" height="1" fill="#00c000"/><rect x="1668" y="745" width="185" height="1" fill="#00c000"/><rect x="1654" y="746" width="199" height="1" fill="#00c000"/><rect x="1710" y="747" width="143" height="1" fill="#80e000"/><rect x="1729" y="748" width="124" height="1" fill="#ffff00"/><rect x="1730" y="749" width="123" height="1" fill="#ffc000"/><rect x="1734" y="750" width="119" height="1" fill="#ffc000"/><rect x="1740" y="751" width="113" height="1" fill="#ff8000"/><rect x="1739" y="752" width="114" height="1" fill="#ffc000"/><rect x="1745" y="753" width="108" height="1" fill="#ff8000"/><rect x="1738" y="754" width="115" height="1" fill="#ff8000"/><rect x="1754" y="755" width="99" height="1" fill="#ffc000"/><rect x="1735" y="756" width="118" height="1" fill="#ff8000"/><rect x="1736" y="757" width="117" height="1" fill="#ffc000"/><rect x="1712" y="758" width="141" height="1" fill="#ffff00"/><rect x="1690" y="759" width="163" height="1" fill="#ffff00"/><rect x="1723" y="760" width="130" height="1" fill="#ffff00"/><rect x="1719" y="761" width="134" height="1" fill="#ff8000"/><rect x="1731" y="762" width="122" height="1" fill="#ffc000"/><rect x="1740" y="763" width="113" height="1" fill="#ffc000"/><rect x="1737" y="764" width="116" height="1" fill="#ffc000"/><rect x="1718" y="765" width="135" height="1" fill="#ffc000"/><rect x="1725" y="766" width="128" height="1" fill="#ffff00"/><rect x="1704" y="767" width="149" height="1" fill="#00c000"/><rect x="1676" y="768" width="177" height="1" fill="#00c000"/><rect x="1675" y="769" width="178" height="1" fill="#00c000"/><rect x="1709" y="770" width="144" height="1" fill="#00c000"/><rect x="1715" y="771" width="138" height="1" fill="#80e000"/><rect x="1707" y="772" width="146" height="1" fill="#ffff00"/><rect x="1729" y="773" width="124" height="1" fill="#ffc000"/><rect x="1751" y="774" width="102" height="1" fill="#ff8000"/><rect x="1752" y="775" width="101" height="1" fill="#ff8000"/><rect x="1753" y="776" width="100" height="1" fill="#c08000"/><rect x="1779" y="777" width="74" height="1" fill="#c08000"/><rect x="1786" y="778" width="67" height="1" fill="#c08000"/><rect x="1785" y="779" width="68" height="1" fill="#c08000"/><rect x="1791" y="780" width="62" height="1" fill="#c08000"/><rect x="1804" y="781" width="49" height="1" fill="#ff0000"/><rect x="1790" y="782" width="63" height="1" fill="#c08000"/><rect x="1783" y="783" width="70" height="1" fill="#c08000"/><rect x="1780" y="784" width="73" height="1" fill="#c08000"/><rect x="1770" y="785" width="83" height="1" fill="#ff8000"/><rect x="1737" y="786" width="116" height="1" fill="#ffc000"/><rect x="1762" y="787" width="91" height="1" fill="#ff8000"/><rect x="1770" y="788" width="83" height="1" fill="#c08000"/><rect x="1771" y="789" width="82" height="1" fill="#c08000"/><rect x="1779" y="790" width="74" height="1" fill="#c08000"/><rect x="1799" y="791" width="54" height="1" fill="#c08000"/><rect x="1806" y="792" width="47" height="1" fill="#ff0000"/><rect x="1812" y="793" width="41" height="1" fill="#ff0000"/><rect x="1826" y="794" width="27" height="1" fill="#ff0000"/><rect x="1830" y="795" width="23" height="1" fill="#c00000"/><rect x="1836" y="796" width="17" height="1" fill="#c00000"/><rect x="1838" y="797" width="15" height="1" fill="#c00000"/><rect x="1840" y="798" width="13" height="1" fill="#c00000"/><rect x="1845" y="799" width="8" height="1" fill="#c00000"/><rect x="1845" y="800" width="8" height="1" fill="#c00000"/><rect x="1843" y="801" width="10" height="1" fill="#c00000"/><rect x="1841" y="802" width="12" height="1" fill="#c00000"/><rect x="1838" y="803" width="15" height="1" fill="#c00000"/><rect x="1833" y="804" width="20" height="1" fill="#c00000"/><rect x="1832" y="805" width="21" height="1" fill="#c00000"/><rect x="1823" y="806" width="30" height="1" fill="#ff0000"/><rect x="1819" y="807" width="34" height="1" fill="#ff0000"/><rect x="1801" y="808" width="52" height="1" fill="#ff0000"/><rect x="1784" y="809" width="69" height="1" fill="#c08000"/><rect x="1775" y="810" width="78" height="1" fill="#ff8000"/><rect x="1752" y="811" width="101" height="1" fill="#ff8000"/><rect x="1774" y="812" width="79" height="1" fill="#c08000"/><rect x="1768" y="813" width="85" height="1" fill="#c08000"/><rect x="1804" y="814" width="49" height="1" fill="#ff0000"/><rect x="1808" y="815" width="45" height="1" fill="#ff0000"/><rect x="1805" y="816" width="48" height="1" fill="#ff0000"/><rect x="1815" y="817" width="38" height="1" fill="#ff0000"/><rect x="1818" y="818" width="35" height="1" fill="#ff0000"/><rect x="1807" y="819" width="46" height="1" fill="#ff0000"/><rect x="1819" y="820" width="34" height="1" fill="#ff0000"/><rect x="1829" y="821" width="24" height="1" fill="#ff0000"/><rect x="900" y="174" width="953" height="1" fill="#f00"/><rect x="900" y="187" width="953" height="1" fill="#f00"/><rect x="900" y="210" width="953" height="1" fill="#f00"/><rect x="900" y="217" width="953" height="1" fill="#f00"/><rect x="900" y="231" width="953" height="1" fill="#f00"/><rect x="900" y="233" width="953" height="1" fill="#f00"/><rect x="900" y="240" width="953" height="1" fill="#f00"/><rect x="900" y="267" width="953" height="1" fill="#f00"/><rect x="900" y="271" width="953" height="1" fill="#f00"/><rect x="900" y="275" width="953" height="1" fill="#f00"/><rect x="900" y="280" width="953" height="1" fill="#f00"/><rect x="900" y="296" width="953" height="1" fill="#f00"/><rect x="900" y="298" width="953" height="1" fill="#f00"/><rect x="900" y="328" width="953" height="1" fill="#f00"/><rect x="900" y="337" width="953" height="1" fill="#f00"/><rect x="900" y="363" width="953" height="1" fill="#f00"/><rect x="900" y="369" width="953" height="1" fill="#f00"/><rect x="900" y="451" width="953" height="1" fill="#f00"/><rect x="900" y="463" width="953" height="1" fill="#f00"/><rect x="900" y="477" width="953" height="1" fill="#f00"/><rect x="900" y="487" width="953" height="1" fill="#f00"/><rect x="3" y="167" width="1850" height="1" fill="url(#hd)"/><rect x="3" y="190" width="1850" height="1" fill="url(#hd)"/><rect x="3" y="203" width="1850" height="1" fill="url(#hd)"/><rect x="3" y="222" width="1850" height="1" fill="url(#hd)"/><rect x="3" y="244" width="1850" height="1" fill="url(#hd)"/><rect x="3" y="264" width="1850" height="1" fill="url(#hd)"/><rect x="3" y="273" width="1850" height="1" fill="url(#hd)"/><rect x="3" y="289" width="1850" height="1" fill="url(#hd)"/><rect x="3" y="293" width="1850" height="1" fill="url(#hd)"/><rect x="3" y="309" width="1850" height="1" fill="url(#hd)"/><rect x="3" y="341" width="1850" height="1" fill="url(#hd)"/><rect x="3" y="348" width="1850" height="1" fill="url(#hd)"/><rect x="3" y="358" width="1850" height="1" fill="url(#hd)"/><rect x="3" y="361" width="1850" height="1" fill="url(#hd)"/><rect x="3" y="380" width="1850" height="1" fill="url(#hd)"/><rect x="3" y="401" width="1850" height="1" fill="url(#hd)"/><rect x="3" y="415" width="1850" height="1" fill="url(#hd)"/><rect x="3" y="433" width="1850" height="1" fill="url(#hd)"/><rect x="3" y="445" width="1850" height="1" fill="url(#hd)"/><rect x="3" y="470" width="1850" height="1" fill="url(#hd)"/><rect x="3" y="508" width="1850" height="1" fill="url(#hd)"/><rect x="3" y="355" width="1760" height="2" fill="#808080"/><rect x="9" y="741" width="1595" height="2" fill="#ff00ff"/><rect x="1604" y="742" width="62" height="1" fill="#0080ff"/><rect x="126" y="810" width="3" height="11" fill="#b4b4f8"/><rect x="134" y="803" width="3" height="18" fill="#b4b4f8"/><rect x="142" y="787" width="3" height="5" fill="#b4b4f8"/><rect x="150" y="764" width="3" height="28" fill="#b4b4f8"/><rect x="158" y="762" width="3" height="21" fill="#b4b4f8"/><rect x="166" y="757" width="3" height="20" fill="#b4b4f8"/><rect x="174" y="744" width="3" height="42" fill="#b4b4f8"/><rect x="182" y="743" width="3" height="13" fill="#b4b4f8"/><rect x="190" y="743" width="3" height="10" fill="#b4b4f8"/><rect x="198" y="746" width="3" height="8" fill="#b4b4f8"/><rect x="206" y="732" width="3" height="10" fill="#b4b4f8"/><rect x="214" y="726" width="3" height="20" fill="#b4b4f8"/><rect x="222" y="724" width="3" height="22" fill="#b4b4f8"/><rect x="230" y="732" width="3" height="26" fill="#b4b4f8"/><rect x="238" y="724" width="3" height="15" fill="#b4b4f8"/><rect x="246" y="694" width="3" height="15" fill="#b4b4f8"/><rect x="254" y="678" width="3" height="13" fill="#b4b4f8"/><rect x="262" y="647" width="3" height="36" fill="#b4b4f8"/><polyline points="129,815 137,812 145,790 153,778 161,770 169,760 177,772 185,750 193,746 201,750 209,736 217,730 225,746 233,746 241,731 249,701 257,684 265,664" fill="none" stroke="#ff00ff" stroke-width="2" shape-rendering="auto"/><rect x="129" y="808" width="1" height="13" fill="#00c800"/><rect x="127" y="811" width="5" height="8" fill="#00c800"/><rect x="128" y="812" width="3" height="6" fill="#007000"/><rect x="125" y="806" width="8" height="2" fill="#0000ff"/><rect x="137" y="804" width="1" height="17" fill="#00c800"/><rect x="135" y="804" width="5" height="17" fill="#00c800"/><rect x="136" y="805" width="3" height="15" fill="#007000"/><rect x="133" y="803" width="8" height="2" fill="#0000ff"/><rect x="133" y="821" width="8" height="2" fill="#ff0000"/><rect x="145" y="786" width="1" height="6" fill="#00c800"/><rect x="143" y="788" width="5" height="4" fill="#00c800"/><rect x="144" y="789" width="3" height="2" fill="#007000"/><rect x="141" y="783" width="8" height="2" fill="#0000ff"/><rect x="141" y="779" width="14" height="1" fill="#0000ff"/><rect x="141" y="793" width="8" height="2" fill="#ff0000"/><rect x="153" y="765" width="1" height="27" fill="#00c800"/><rect x="151" y="765" width="5" height="27" fill="#00c800"/><rect x="152" y="766" width="3" height="25" fill="#007000"/><rect x="149" y="763" width="8" height="2" fill="#0000ff"/><rect x="149" y="793" width="8" height="2" fill="#ff0000"/><rect x="161" y="763" width="1" height="20" fill="#00c800"/><rect x="159" y="763" width="5" height="13" fill="#00c800"/><rect x="160" y="764" width="3" height="11" fill="#007000"/><rect x="157" y="761" width="8" height="2" fill="#0000ff"/><rect x="157" y="783" width="8" height="2" fill="#ff0000"/><rect x="169" y="756" width="1" height="21" fill="#00c800"/><rect x="167" y="758" width="5" height="3" fill="#00c800"/><rect x="168" y="759" width="3" height="1" fill="#007000"/><rect x="165" y="754" width="8" height="2" fill="#0000ff"/><rect x="165" y="750" width="14" height="1" fill="#0000ff"/><rect x="165" y="777" width="8" height="2" fill="#ff0000"/><rect x="177" y="740" width="1" height="46" fill="#e00000"/><rect x="175" y="745" width="5" height="27" fill="#e00000"/><rect x="176" y="746" width="3" height="25" fill="#800000"/><rect x="173" y="738" width="8" height="2" fill="#0000ff"/><rect x="173" y="786" width="8" height="2" fill="#ff0000"/><rect x="185" y="742" width="1" height="14" fill="#00c800"/><rect x="183" y="744" width="5" height="12" fill="#00c800"/><rect x="184" y="745" width="3" height="10" fill="#007000"/><rect x="181" y="739" width="8" height="2" fill="#0000ff"/><rect x="181" y="757" width="8" height="2" fill="#ff0000"/><rect x="193" y="742" width="1" height="11" fill="#00c800"/><rect x="191" y="744" width="5" height="4" fill="#00c800"/><rect x="192" y="745" width="3" height="2" fill="#007000"/><rect x="189" y="740" width="8" height="2" fill="#0000ff"/><rect x="189" y="736" width="14" height="1" fill="#0000ff"/><rect x="189" y="754" width="8" height="2" fill="#ff0000"/><rect x="201" y="745" width="1" height="9" fill="#00c800"/><rect x="199" y="747" width="5" height="5" fill="#00c800"/><rect x="200" y="748" width="3" height="3" fill="#007000"/><rect x="197" y="742" width="8" height="2" fill="#0000ff"/><rect x="197" y="755" width="8" height="2" fill="#ff0000"/><rect x="209" y="730" width="1" height="12" fill="#00c800"/><rect x="207" y="733" width="5" height="6" fill="#00c800"/><rect x="208" y="734" width="3" height="4" fill="#007000"/><rect x="205" y="728" width="8" height="2" fill="#0000ff"/><rect x="205" y="743" width="8" height="2" fill="#ff0000"/><rect x="217" y="723" width="1" height="23" fill="#00c800"/><rect x="215" y="727" width="5" height="7" fill="#00c800"/><rect x="216" y="728" width="3" height="5" fill="#007000"/><rect x="213" y="721" width="8" height="2" fill="#0000ff"/><rect x="213" y="717" width="14" height="1" fill="#0000ff"/><rect x="213" y="747" width="8" height="2" fill="#ff0000"/><rect x="225" y="722" width="1" height="24" fill="#e00000"/><rect x="223" y="725" width="5" height="21" fill="#e00000"/><rect x="224" y="726" width="3" height="19" fill="#800000"/><rect x="221" y="720" width="8" height="2" fill="#0000ff"/><rect x="221" y="747" width="8" height="2" fill="#ff0000"/><rect x="233" y="729" width="1" height="29" fill="#00c800"/><rect x="231" y="733" width="5" height="25" fill="#00c800"/><rect x="232" y="734" width="3" height="23" fill="#007000"/><rect x="229" y="727" width="8" height="2" fill="#0000ff"/><rect x="229" y="759" width="8" height="2" fill="#ff0000"/><rect x="241" y="722" width="1" height="17" fill="#00c800"/><rect x="239" y="725" width="5" height="12" fill="#00c800"/><rect x="240" y="726" width="3" height="10" fill="#007000"/><rect x="237" y="719" width="8" height="2" fill="#0000ff"/><rect x="237" y="715" width="14" height="1" fill="#0000ff"/><rect x="237" y="740" width="8" height="2" fill="#ff0000"/><rect x="249" y="691" width="1" height="18" fill="#00c800"/><rect x="247" y="695" width="5" height="12" fill="#00c800"/><rect x="248" y="696" width="3" height="10" fill="#007000"/><rect x="245" y="688" width="8" height="2" fill="#0000ff"/><rect x="245" y="710" width="8" height="2" fill="#ff0000"/><rect x="257" y="675" width="1" height="16" fill="#00c800"/><rect x="255" y="679" width="5" height="9" fill="#00c800"/><rect x="256" y="680" width="3" height="7" fill="#007000"/><rect x="253" y="672" width="8" height="2" fill="#0000ff"/><rect x="253" y="692" width="8" height="2" fill="#ff0000"/><rect x="265" y="644" width="1" height="39" fill="#00c800"/><rect x="263" y="648" width="5" height="33" fill="#00c800"/><rect x="264" y="649" width="3" height="31" fill="#007000"/><rect x="261" y="641" width="8" height="2" fill="#0000ff"/><rect x="261" y="637" width="14" height="1" fill="#0000ff"/><rect x="261" y="684" width="8" height="2" fill="#ff0000"/><rect x="62" y="819" width="8" height="1" fill="#00f"/><rect x="70" y="812" width="8" height="1" fill="#00f"/><rect x="110" y="810" width="8" height="1" fill="#00f"/><rect x="118" y="814" width="8" height="1" fill="#00f"/><path d="M249 820 Q258 817 267 810" stroke="#0000c0" fill="none" stroke-width="1"/><rect x="9" y="854" width="1" height="51" fill="#ff0000"/><rect x="7" y="865" width="5" height="40" fill="#e00000"/><rect x="8" y="866" width="3" height="38" fill="#800000"/><rect x="17" y="843" width="1" height="26" fill="#00e000"/><rect x="15" y="849" width="5" height="16" fill="#00c000"/><rect x="16" y="850" width="3" height="14" fill="#008000"/><rect x="25" y="863" width="1" height="34" fill="#ff0000"/><rect x="23" y="865" width="5" height="27" fill="#e00000"/><rect x="24" y="866" width="3" height="25" fill="#800000"/><rect x="33" y="863" width="1" height="14" fill="#ff0000"/><rect x="31" y="865" width="5" height="12" fill="#e00000"/><rect x="32" y="866" width="3" height="10" fill="#800000"/><rect x="41" y="863" width="1" height="16" fill="#ff0000"/><rect x="39" y="865" width="5" height="14" fill="#e00000"/><rect x="40" y="866" width="3" height="12" fill="#800000"/><rect x="49" y="842" width="1" height="23" fill="#00e000"/><rect x="47" y="847" width="5" height="18" fill="#00c000"/><rect x="48" y="848" width="3" height="16" fill="#008000"/><rect x="57" y="864" width="1" height="21" fill="#ff0000"/><rect x="55" y="865" width="5" height="8" fill="#e00000"/><rect x="56" y="866" width="3" height="6" fill="#800000"/><rect x="65" y="853" width="1" height="12" fill="#00e000"/><rect x="63" y="860" width="5" height="5" fill="#00c000"/><rect x="64" y="861" width="3" height="3" fill="#008000"/><rect x="73" y="860" width="1" height="27" fill="#ff0000"/><rect x="71" y="865" width="5" height="19" fill="#e00000"/><rect x="72" y="866" width="3" height="17" fill="#800000"/><rect x="81" y="865" width="1" height="30" fill="#ff0000"/><rect x="79" y="865" width="5" height="23" fill="#e00000"/><rect x="80" y="866" width="3" height="21" fill="#800000"/><rect x="89" y="842" width="1" height="28" fill="#00e000"/><rect x="87" y="842" width="5" height="23" fill="#00c000"/><rect x="88" y="843" width="3" height="21" fill="#008000"/><rect x="97" y="862" width="1" height="24" fill="#ff0000"/><rect x="95" y="865" width="5" height="19" fill="#e00000"/><rect x="96" y="866" width="3" height="17" fill="#800000"/><rect x="105" y="850" width="1" height="17" fill="#00e000"/><rect x="103" y="850" width="5" height="15" fill="#00c000"/><rect x="104" y="851" width="3" height="13" fill="#008000"/><rect x="113" y="842" width="1" height="26" fill="#00e000"/><rect x="111" y="842" width="5" height="23" fill="#00c000"/><rect x="112" y="843" width="3" height="21" fill="#008000"/><rect x="121" y="855" width="1" height="30" fill="#00e000"/><rect x="119" y="857" width="5" height="8" fill="#00c000"/><rect x="120" y="858" width="3" height="6" fill="#008000"/><rect x="129" y="861" width="1" height="27" fill="#ff0000"/><rect x="127" y="865" width="5" height="19" fill="#e00000"/><rect x="128" y="866" width="3" height="17" fill="#800000"/><rect x="137" y="849" width="1" height="19" fill="#00e000"/><rect x="135" y="853" width="5" height="12" fill="#00c000"/><rect x="136" y="854" width="3" height="10" fill="#008000"/><rect x="145" y="851" width="1" height="17" fill="#ff0000"/><rect x="143" y="865" width="5" height="2" fill="#e00000"/><rect x="153" y="843" width="1" height="23" fill="#00e000"/><rect x="151" y="852" width="5" height="13" fill="#00c000"/><rect x="152" y="853" width="3" height="11" fill="#008000"/><rect x="161" y="842" width="1" height="24" fill="#00e000"/><rect x="159" y="842" width="5" height="23" fill="#00c000"/><rect x="160" y="843" width="3" height="21" fill="#008000"/><rect x="169" y="860" width="1" height="21" fill="#ff0000"/><rect x="167" y="865" width="5" height="5" fill="#e00000"/><rect x="168" y="866" width="3" height="3" fill="#800000"/><rect x="177" y="863" width="1" height="41" fill="#ff0000"/><rect x="175" y="865" width="5" height="33" fill="#e00000"/><rect x="176" y="866" width="3" height="31" fill="#800000"/><rect x="185" y="855" width="1" height="17" fill="#ff0000"/><rect x="183" y="865" width="5" height="6" fill="#e00000"/><rect x="184" y="866" width="3" height="4" fill="#800000"/><rect x="193" y="849" width="1" height="18" fill="#00e000"/><rect x="191" y="861" width="5" height="4" fill="#00c000"/><rect x="192" y="862" width="3" height="2" fill="#008000"/><rect x="201" y="848" width="1" height="19" fill="#00e000"/><rect x="199" y="852" width="5" height="13" fill="#00c000"/><rect x="200" y="853" width="3" height="11" fill="#008000"/><rect x="209" y="852" width="1" height="14" fill="#00e000"/><rect x="207" y="852" width="5" height="13" fill="#00c000"/><rect x="208" y="853" width="3" height="11" fill="#008000"/><rect x="217" y="860" width="1" height="14" fill="#ff0000"/><rect x="215" y="865" width="5" height="2" fill="#e00000"/><rect x="225" y="858" width="1" height="36" fill="#ff0000"/><rect x="223" y="865" width="5" height="24" fill="#e00000"/><rect x="224" y="866" width="3" height="22" fill="#800000"/><rect x="233" y="842" width="1" height="25" fill="#00e000"/><rect x="231" y="844" width="5" height="21" fill="#00c000"/><rect x="232" y="845" width="3" height="19" fill="#008000"/><rect x="241" y="853" width="1" height="14" fill="#00e000"/><rect x="239" y="855" width="5" height="10" fill="#00c000"/><rect x="240" y="856" width="3" height="8" fill="#008000"/><rect x="249" y="855" width="1" height="22" fill="#00e000"/><rect x="247" y="860" width="5" height="5" fill="#00c000"/><rect x="248" y="861" width="3" height="3" fill="#008000"/><rect x="257" y="864" width="1" height="14" fill="#ff0000"/><rect x="255" y="865" width="5" height="7" fill="#e00000"/><rect x="256" y="866" width="3" height="5" fill="#800000"/><rect x="265" y="843" width="1" height="25" fill="#00e000"/><rect x="263" y="855" width="5" height="10" fill="#00c000"/><rect x="264" y="856" width="3" height="8" fill="#008000"/><rect x="273" y="863" width="1" height="16" fill="#ff0000"/><rect x="271" y="865" width="5" height="7" fill="#e00000"/><rect x="272" y="866" width="3" height="5" fill="#800000"/><rect x="281" y="862" width="1" height="10" fill="#ff0000"/><rect x="279" y="866" width="5" height="2" fill="#e00000"/><rect x="289" y="842" width="1" height="24" fill="#00e000"/><rect x="287" y="864" width="5" height="2" fill="#00c000"/><rect x="297" y="842" width="1" height="27" fill="#00e000"/><rect x="295" y="842" width="5" height="23" fill="#00c000"/><rect x="296" y="843" width="3" height="21" fill="#008000"/><rect x="305" y="865" width="1" height="28" fill="#ff0000"/><rect x="303" y="865" width="5" height="12" fill="#e00000"/><rect x="304" y="866" width="3" height="10" fill="#800000"/><rect x="313" y="856" width="1" height="42" fill="#00e000"/><rect x="311" y="865" width="5" height="2" fill="#00c000"/><rect x="321" y="848" width="1" height="48" fill="#ff0000"/><rect x="319" y="865" width="5" height="4" fill="#e00000"/><rect x="320" y="866" width="3" height="2" fill="#800000"/><rect x="329" y="861" width="1" height="5" fill="#00e000"/><rect x="327" y="862" width="5" height="3" fill="#00c000"/><rect x="328" y="863" width="3" height="1" fill="#008000"/><rect x="337" y="854" width="1" height="35" fill="#ff0000"/><rect x="335" y="865" width="5" height="24" fill="#e00000"/><rect x="336" y="866" width="3" height="22" fill="#800000"/><rect x="345" y="856" width="1" height="25" fill="#ff0000"/><rect x="343" y="865" width="5" height="13" fill="#e00000"/><rect x="344" y="866" width="3" height="11" fill="#800000"/><rect x="353" y="861" width="1" height="19" fill="#ff0000"/><rect x="351" y="865" width="5" height="15" fill="#e00000"/><rect x="352" y="866" width="3" height="13" fill="#800000"/><rect x="361" y="863" width="1" height="20" fill="#ff0000"/><rect x="359" y="865" width="5" height="17" fill="#e00000"/><rect x="360" y="866" width="3" height="15" fill="#800000"/><rect x="369" y="865" width="1" height="25" fill="#ff0000"/><rect x="367" y="865" width="5" height="23" fill="#e00000"/><rect x="368" y="866" width="3" height="21" fill="#800000"/><rect x="377" y="855" width="1" height="16" fill="#ff0000"/><rect x="375" y="865" width="5" height="2" fill="#e00000"/><rect x="385" y="864" width="1" height="22" fill="#ff0000"/><rect x="383" y="865" width="5" height="14" fill="#e00000"/><rect x="384" y="866" width="3" height="12" fill="#800000"/><rect x="393" y="851" width="1" height="14" fill="#00e000"/><rect x="391" y="854" width="5" height="11" fill="#00c000"/><rect x="392" y="855" width="3" height="9" fill="#008000"/><rect x="401" y="864" width="1" height="44" fill="#ff0000"/><rect x="399" y="865" width="5" height="43" fill="#e00000"/><rect x="400" y="866" width="3" height="41" fill="#800000"/><rect x="409" y="845" width="1" height="23" fill="#00e000"/><rect x="407" y="847" width="5" height="18" fill="#00c000"/><rect x="408" y="848" width="3" height="16" fill="#008000"/><rect x="417" y="857" width="1" height="16" fill="#00e000"/><rect x="415" y="859" width="5" height="6" fill="#00c000"/><rect x="416" y="860" width="3" height="4" fill="#008000"/><rect x="425" y="846" width="1" height="20" fill="#00e000"/><rect x="423" y="860" width="5" height="5" fill="#00c000"/><rect x="424" y="861" width="3" height="3" fill="#008000"/><rect x="433" y="842" width="1" height="26" fill="#00e000"/><rect x="431" y="843" width="5" height="22" fill="#00c000"/><rect x="432" y="844" width="3" height="20" fill="#008000"/><rect x="441" y="842" width="1" height="28" fill="#ff0000"/><rect x="439" y="865" width="5" height="5" fill="#e00000"/><rect x="440" y="866" width="3" height="3" fill="#800000"/><rect x="449" y="861" width="1" height="5" fill="#00e000"/><rect x="447" y="861" width="5" height="4" fill="#00c000"/><rect x="448" y="862" width="3" height="2" fill="#008000"/><rect x="457" y="853" width="1" height="18" fill="#00e000"/><rect x="455" y="862" width="5" height="3" fill="#00c000"/><rect x="456" y="863" width="3" height="1" fill="#008000"/><rect x="465" y="851" width="1" height="53" fill="#ff0000"/><rect x="463" y="865" width="5" height="39" fill="#e00000"/><rect x="464" y="866" width="3" height="37" fill="#800000"/><rect x="473" y="845" width="1" height="24" fill="#00e000"/><rect x="471" y="853" width="5" height="12" fill="#00c000"/><rect x="472" y="854" width="3" height="10" fill="#008000"/><rect x="481" y="851" width="1" height="23" fill="#00e000"/><rect x="479" y="857" width="5" height="8" fill="#00c000"/><rect x="480" y="858" width="3" height="6" fill="#008000"/><rect x="489" y="864" width="1" height="18" fill="#ff0000"/><rect x="487" y="865" width="5" height="8" fill="#e00000"/><rect x="488" y="866" width="3" height="6" fill="#800000"/><rect x="497" y="856" width="1" height="38" fill="#ff0000"/><rect x="495" y="865" width="5" height="28" fill="#e00000"/><rect x="496" y="866" width="3" height="26" fill="#800000"/><rect x="505" y="860" width="1" height="19" fill="#ff0000"/><rect x="503" y="865" width="5" height="2" fill="#e00000"/><rect x="513" y="842" width="1" height="32" fill="#00e000"/><rect x="511" y="842" width="5" height="23" fill="#00c000"/><rect x="512" y="843" width="3" height="21" fill="#008000"/><rect x="521" y="854" width="1" height="16" fill="#00e000"/><rect x="519" y="862" width="5" height="3" fill="#00c000"/><rect x="520" y="863" width="3" height="1" fill="#008000"/><rect x="529" y="865" width="1" height="2" fill="#ff0000"/><rect x="527" y="865" width="5" height="2" fill="#e00000"/><rect x="537" y="842" width="1" height="27" fill="#00e000"/><rect x="535" y="842" width="5" height="23" fill="#00c000"/><rect x="536" y="843" width="3" height="21" fill="#008000"/><rect x="545" y="847" width="1" height="25" fill="#00e000"/><rect x="543" y="848" width="5" height="17" fill="#00c000"/><rect x="544" y="849" width="3" height="15" fill="#008000"/><rect x="553" y="854" width="1" height="28" fill="#ff0000"/><rect x="551" y="865" width="5" height="17" fill="#e00000"/><rect x="552" y="866" width="3" height="15" fill="#800000"/><rect x="561" y="858" width="1" height="33" fill="#ff0000"/><rect x="559" y="865" width="5" height="25" fill="#e00000"/><rect x="560" y="866" width="3" height="23" fill="#800000"/><rect x="569" y="860" width="1" height="25" fill="#ff0000"/><rect x="567" y="865" width="5" height="13" fill="#e00000"/><rect x="568" y="866" width="3" height="11" fill="#800000"/><rect x="577" y="857" width="1" height="28" fill="#ff0000"/><rect x="575" y="865" width="5" height="12" fill="#e00000"/><rect x="576" y="866" width="3" height="10" fill="#800000"/><rect x="585" y="842" width="1" height="24" fill="#00e000"/><rect x="583" y="861" width="5" height="4" fill="#00c000"/><rect x="584" y="862" width="3" height="2" fill="#008000"/><rect x="593" y="842" width="1" height="26" fill="#00e000"/><rect x="591" y="842" width="5" height="23" fill="#00c000"/><rect x="592" y="843" width="3" height="21" fill="#008000"/><rect x="601" y="863" width="1" height="14" fill="#ff0000"/><rect x="599" y="865" width="5" height="11" fill="#e00000"/><rect x="600" y="866" width="3" height="9" fill="#800000"/><rect x="609" y="856" width="1" height="38" fill="#ff0000"/><rect x="607" y="865" width="5" height="26" fill="#e00000"/><rect x="608" y="866" width="3" height="24" fill="#800000"/><rect x="617" y="855" width="1" height="16" fill="#ff0000"/><rect x="615" y="865" width="5" height="5" fill="#e00000"/><rect x="616" y="866" width="3" height="3" fill="#800000"/><rect x="625" y="858" width="1" height="14" fill="#ff0000"/><rect x="623" y="865" width="5" height="3" fill="#e00000"/><rect x="624" y="866" width="3" height="1" fill="#800000"/><rect x="633" y="846" width="1" height="22" fill="#00e000"/><rect x="631" y="852" width="5" height="13" fill="#00c000"/><rect x="632" y="853" width="3" height="11" fill="#008000"/><rect x="641" y="856" width="1" height="21" fill="#00e000"/><rect x="639" y="859" width="5" height="6" fill="#00c000"/><rect x="640" y="860" width="3" height="4" fill="#008000"/><rect x="649" y="864" width="1" height="9" fill="#ff0000"/><rect x="647" y="865" width="5" height="4" fill="#e00000"/><rect x="648" y="866" width="3" height="2" fill="#800000"/><rect x="8" y="935" width="2" height="18" fill="#ff0000"/><rect x="16" y="935" width="2" height="18" fill="#00ff00"/><rect x="24" y="937" width="2" height="16" fill="#ff0000"/><rect x="32" y="941" width="2" height="12" fill="#ff0000"/><rect x="40" y="943" width="2" height="10" fill="#ff0000"/><rect x="48" y="942" width="2" height="11" fill="#00ff00"/><rect x="56" y="941" width="2" height="12" fill="#ff0000"/><rect x="64" y="942" width="2" height="11" fill="#00ff00"/><rect x="72" y="938" width="2" height="15" fill="#ff0000"/><rect x="80" y="938" width="2" height="15" fill="#ff0000"/><rect x="88" y="942" width="2" height="11" fill="#00ff00"/><rect x="96" y="941" width="2" height="12" fill="#ff0000"/><rect x="104" y="942" width="2" height="11" fill="#00ff00"/><rect x="112" y="936" width="2" height="17" fill="#00ff00"/><rect x="120" y="933" width="2" height="20" fill="#00ff00"/><rect x="128" y="943" width="2" height="10" fill="#00ff00"/><rect x="136" y="944" width="2" height="9" fill="#00ff00"/><rect x="144" y="944" width="2" height="9" fill="#00ff00"/><rect x="152" y="942" width="2" height="11" fill="#00ff00"/><rect x="160" y="940" width="2" height="13" fill="#00ff00"/><rect x="168" y="942" width="2" height="11" fill="#00ff00"/><rect x="176" y="938" width="2" height="15" fill="#ff0000"/><rect x="184" y="941" width="2" height="12" fill="#00ff00"/><rect x="192" y="942" width="2" height="11" fill="#00ff00"/><rect x="200" y="944" width="2" height="9" fill="#00ff00"/><rect x="208" y="946" width="2" height="7" fill="#00ff00"/><rect x="216" y="944" width="2" height="9" fill="#00ff00"/><rect x="224" y="941" width="2" height="12" fill="#ff0000"/><rect x="232" y="943" width="2" height="10" fill="#00ff00"/><rect x="240" y="944" width="2" height="9" fill="#00ff00"/><rect x="248" y="942" width="2" height="11" fill="#00ff00"/><rect x="256" y="943" width="2" height="10" fill="#00ff00"/><rect x="264" y="941" width="2" height="12" fill="#00ff00"/><rect x="272" y="939" width="2" height="14" fill="#00ff00"/><rect x="280" y="943" width="2" height="10" fill="#00ff00"/><rect x="288" y="941" width="2" height="12" fill="#ff0000"/><rect x="296" y="943" width="2" height="10" fill="#00ff00"/><rect x="304" y="937" width="2" height="16" fill="#00ff00"/><rect x="312" y="929" width="2" height="24" fill="#ff0000"/><rect x="320" y="929" width="2" height="24" fill="#ff0000"/><rect x="328" y="952" width="2" height="1" fill="#00ff00"/><rect x="336" y="933" width="2" height="20" fill="#ff0000"/><rect x="344" y="937" width="2" height="16" fill="#00ff00"/><rect x="352" y="936" width="2" height="17" fill="#ff0000"/><rect x="360" y="941" width="2" height="12" fill="#ff0000"/><rect x="368" y="941" width="2" height="12" fill="#00ff00"/><rect x="376" y="942" width="2" height="11" fill="#ff0000"/><rect x="384" y="940" width="2" height="13" fill="#ff0000"/><rect x="392" y="932" width="2" height="21" fill="#00ff00"/><rect x="400" y="935" width="2" height="18" fill="#ff0000"/><rect x="408" y="935" width="2" height="18" fill="#ff0000"/><rect x="416" y="937" width="2" height="16" fill="#ff0000"/><rect x="424" y="936" width="2" height="17" fill="#00ff00"/><rect x="432" y="934" width="2" height="19" fill="#ff0000"/><rect x="440" y="936" width="2" height="17" fill="#00ff00"/><rect x="448" y="952" width="2" height="1" fill="#00ff00"/><rect x="456" y="942" width="2" height="11" fill="#00ff00"/><rect x="464" y="939" width="2" height="14" fill="#00ff00"/><rect x="472" y="939" width="2" height="14" fill="#00ff00"/><rect x="480" y="940" width="2" height="13" fill="#00ff00"/><rect x="488" y="940" width="2" height="13" fill="#ff0000"/><rect x="496" y="937" width="2" height="16" fill="#ff0000"/><rect x="504" y="938" width="2" height="15" fill="#ff0000"/><rect x="512" y="933" width="2" height="20" fill="#00ff00"/><rect x="520" y="939" width="2" height="14" fill="#00ff00"/><rect x="528" y="952" width="2" height="1" fill="#ff0000"/><rect x="536" y="937" width="2" height="16" fill="#00ff00"/><rect x="544" y="939" width="2" height="14" fill="#00ff00"/><rect x="552" y="942" width="2" height="11" fill="#00ff00"/><rect x="560" y="941" width="2" height="12" fill="#00ff00"/><rect x="568" y="940" width="2" height="13" fill="#ff0000"/><rect x="576" y="939" width="2" height="14" fill="#ff0000"/><rect x="584" y="936" width="2" height="17" fill="#00ff00"/><rect x="592" y="937" width="2" height="16" fill="#00ff00"/><rect x="600" y="941" width="2" height="12" fill="#00ff00"/><rect x="608" y="941" width="2" height="12" fill="#ff0000"/><rect x="616" y="939" width="2" height="14" fill="#00ff00"/><rect x="624" y="938" width="2" height="15" fill="#00ff00"/><rect x="632" y="937" width="2" height="16" fill="#00ff00"/><rect x="640" y="937" width="2" height="16" fill="#ff0000"/><rect x="648" y="940" width="2" height="13" fill="#ff0000"/></svg>
<span class="t" style="left:1827.00px;top:169px;font-size:15px;color:#ff0000;transform:scaleX(0.9620);">LVN</span>
<span class="t" style="left:1827.00px;top:207px;font-size:15px;color:#ff0000;transform:scaleX(0.9620);">LVN</span>
<span class="t" style="left:1827.00px;top:225px;font-size:15px;color:#ff0000;transform:scaleX(0.9620);">LVN</span>
<span class="t" style="left:1827.00px;top:245px;font-size:15px;color:#ff0000;transform:scaleX(0.9620);">LVN</span>
<span class="t" style="left:1827.00px;top:265px;font-size:15px;color:#ff0000;transform:scaleX(0.9620);">LVN</span>
<span class="t" style="left:1827.00px;top:271px;font-size:15px;color:#ff0000;transform:scaleX(0.9620);">LVN</span>
<span class="t" style="left:1827.00px;top:293px;font-size:15px;color:#ff0000;transform:scaleX(0.9620);">LVN</span>
<span class="t" style="left:1827.00px;top:311px;font-size:15px;color:#ff0000;transform:scaleX(0.9620);">LVN</span>
<span class="t" style="left:1827.00px;top:343px;font-size:15px;color:#ff0000;transform:scaleX(0.9620);">LVN</span>
<span class="t" style="left:1827.00px;top:351px;font-size:15px;color:#ff0000;transform:scaleX(0.9620);">LVN</span>
<span class="t" style="left:1827.00px;top:359px;font-size:15px;color:#ff0000;transform:scaleX(0.9620);">LVN</span>
<span class="t" style="left:1827.00px;top:383px;font-size:15px;color:#ff0000;transform:scaleX(0.9620);">LVN</span>
<span class="t" style="left:1827.00px;top:403px;font-size:15px;color:#ff0000;transform:scaleX(0.9620);">LVN</span>
<span class="t" style="left:1827.00px;top:439px;font-size:15px;color:#ff0000;transform:scaleX(0.9620);">LVN</span>
<span class="t" style="left:1827.00px;top:449px;font-size:15px;color:#ff0000;transform:scaleX(0.9620);">LVN</span>
<span class="t" style="left:1827.00px;top:473px;font-size:15px;color:#ff0000;transform:scaleX(0.9620);">LVN</span>
<span class="t" style="left:1827.00px;top:511px;font-size:15px;color:#ff0000;transform:scaleX(0.9620);">LVN</span>
<span class="t" style="left:81.00px;top:778px;font-size:12px;color:#111;transform:scaleX(0.8800);">L:3215.25</span>
<span class="t" style="left:89.00px;top:772px;font-size:12px;color:#111;transform:scaleX(0.8800);">L:3216.50</span>
<span class="t" style="left:79.00px;top:765px;font-size:12px;color:#111;transform:scaleX(0.8800);">H:3234.25</span>
<span class="t" style="left:87.00px;top:757px;font-size:12px;color:#111;transform:scaleX(0.8800);">H:3259.00</span>
<span class="t" style="left:91.00px;top:751px;font-size:12px;color:#111;transform:scaleX(0.8800);">L:3226.19</span>
<span class="t" style="left:83.00px;top:746px;font-size:12px;color:#111;transform:scaleX(0.8800);">V:828819</span>
<span class="t" style="left:95.00px;top:741px;font-size:12px;color:#111;transform:scaleX(0.8800);">H:3267.00</span>
<span class="t" style="left:103.00px;top:737px;font-size:12px;color:#111;transform:scaleX(0.8800);">L:3246.00</span>
<span class="t" style="left:99.00px;top:731px;font-size:12px;color:#111;transform:scaleX(0.8800);">V:826352</span>
<span class="t" style="left:107.00px;top:727px;font-size:12px;color:#111;transform:scaleX(0.8800);">L:3257.75</span>
<span class="t" style="left:103.00px;top:723px;font-size:12px;color:#111;transform:scaleX(0.8800);">H:3284.25</span>
<span class="t" style="left:111.00px;top:718px;font-size:12px;color:#111;transform:scaleX(0.8800);">H:3295.50</span>
<span class="t" style="left:101.00px;top:710px;font-size:12px;color:#111;transform:scaleX(0.8800);">V:1050462</span>
<span class="t" style="left:119.00px;top:714px;font-size:12px;color:#111;transform:scaleX(0.8800);">H:3294.75</span>
<span class="t" style="left:129.00px;top:717px;font-size:12px;color:#111;transform:scaleX(0.8800);">L:3294.75</span>
<span class="t" style="left:124.00px;top:706px;font-size:12px;color:#111;transform:scaleX(0.8800);">L:3266.25</span>
<span class="t" style="left:139.00px;top:709px;font-size:12px;color:#111;transform:scaleX(0.8800);">V:912571</span>
<span class="t" style="left:149.00px;top:705px;font-size:12px;color:#111;transform:scaleX(0.8800);">H:3320.00</span>
<span class="t" style="left:127.00px;top:700px;font-size:12px;color:#111;transform:scaleX(0.8800);">H:3302.25</span>
<span class="t" style="left:135.00px;top:696px;font-size:12px;color:#111;transform:scaleX(0.8800);">V:1142873</span>
<span class="t" style="left:149.00px;top:699px;font-size:12px;color:#111;transform:scaleX(0.8800);">L:3283.50</span>
<span class="t" style="left:159.00px;top:695px;font-size:12px;color:#111;transform:scaleX(0.8800);">H:3315.50</span>
<span class="t" style="left:169.00px;top:698px;font-size:12px;color:#111;transform:scaleX(0.8800);">L:3313.50</span>
<span class="t" style="left:125.00px;top:687px;font-size:12px;color:#111;transform:scaleX(0.8800);">V:1433612</span>
<span class="t" style="left:141.00px;top:683px;font-size:12px;color:#111;transform:scaleX(0.8800);">V:1110290</span>
<span class="t" style="left:155.00px;top:687px;font-size:12px;color:#111;transform:scaleX(0.8800);">L:3302.75</span>
<span class="t" style="left:167.00px;top:682px;font-size:12px;color:#111;transform:scaleX(0.8800);">H:3335.00</span>
<span class="t" style="left:175.00px;top:685px;font-size:12px;color:#111;transform:scaleX(0.8800);">L:3321.00</span>
<span class="t" style="left:134.00px;top:691px;font-size:12px;color:#111;transform:scaleX(0.8800);">H:3326.50</span>
<span class="t" style="left:145.00px;top:679px;font-size:12px;color:#111;transform:scaleX(0.8800);">V:1043862</span>
<span class="t" style="left:173.00px;top:671px;font-size:12px;color:#111;transform:scaleX(0.8800);">V:1168261</span>
<span class="t" style="left:185.00px;top:675px;font-size:12px;color:#111;transform:scaleX(0.8800);">H:3369.25</span>
<span class="t" style="left:195.00px;top:669px;font-size:12px;color:#111;transform:scaleX(0.8800);">L:3345.25</span>
<span class="t" style="left:198.00px;top:655px;font-size:12px;color:#111;transform:scaleX(0.8800);">H:3368.25</span>
<span class="t" style="left:206.00px;top:659px;font-size:12px;color:#111;transform:scaleX(0.8800);">L:3350.50</span>
<span class="t" style="left:196.00px;top:642px;font-size:12px;color:#111;transform:scaleX(0.8800);">V:1006655</span>
<span class="t" style="left:205.00px;top:645px;font-size:12px;color:#111;transform:scaleX(0.8800);">H:3399.00</span>
<span class="t" style="left:211.00px;top:629px;font-size:12px;color:#111;transform:scaleX(0.8800);">V:899737</span>
<span class="t" style="left:217.00px;top:625px;font-size:12px;color:#111;transform:scaleX(0.8800);">L:3379.75</span>
<span class="t" style="left:214.00px;top:609px;font-size:12px;color:#111;transform:scaleX(0.8800);">H:3402.25</span>
<span class="t" style="left:223.00px;top:613px;font-size:12px;color:#111;transform:scaleX(0.8800);">L:3400.50</span>
<span class="t" style="left:212.00px;top:595px;font-size:12px;color:#111;transform:scaleX(0.8800);">V:1034653</span>
<span class="t" style="left:220.00px;top:583px;font-size:12px;color:#111;transform:scaleX(0.8800);">V:1170299</span>
<span class="t" style="left:228.00px;top:599px;font-size:12px;color:#111;transform:scaleX(0.8800);">L:3415.75</span>
<span class="t" style="left:235.00px;top:571px;font-size:12px;color:#111;transform:scaleX(0.8800);">V:812744</span>
<span class="t" style="left:240.00px;top:575px;font-size:12px;color:#111;transform:scaleX(0.8800);">H:3424.00</span>
<span class="t" style="left:250.00px;top:555px;font-size:12px;color:#111;transform:scaleX(0.8800);">V:983211</span>
<span class="t" style="left:257.00px;top:537px;font-size:12px;color:#111;transform:scaleX(0.8800);">L:3452.50</span>
<span class="t" style="left:254.00px;top:522px;font-size:12px;color:#111;transform:scaleX(0.8800);">H:3481.25</span>
<span class="t" style="left:257.00px;top:529px;font-size:12px;color:#111;transform:scaleX(0.8800);">V:1123456</span>
<span class="t" style="left:252.00px;top:507px;font-size:12px;color:#111;transform:scaleX(0.8800);">V:1285652</span>
<span class="t" style="left:100.97px;top:717px;font-size:12px;color:#111;transform:scaleX(0.8800);">L:3367.00</span>
<span class="t" style="left:113.95px;top:713px;font-size:12px;color:#111;transform:scaleX(0.8800);">V:874372</span>
<span class="t" style="left:124.41px;top:701px;font-size:12px;color:#111;transform:scaleX(0.8800);">H:3291.75</span>
<span class="t" style="left:128.20px;top:700px;font-size:12px;color:#111;transform:scaleX(0.8800);">V:1047257</span>
<span class="t" style="left:135.53px;top:691px;font-size:12px;color:#111;transform:scaleX(0.8800);">H:3280.00</span>
<span class="t" style="left:140.72px;top:690px;font-size:12px;color:#111;transform:scaleX(0.8800);">V:958664</span>
<span class="t" style="left:148.03px;top:688px;font-size:12px;color:#111;transform:scaleX(0.8800);">V:1045948</span>
<span class="t" style="left:172.86px;top:675px;font-size:12px;color:#111;transform:scaleX(0.8800);">V:1123358</span>
<span class="t" style="left:172.02px;top:670px;font-size:12px;color:#111;transform:scaleX(0.8800);">L:3340.25</span>
<span class="t" style="left:179.41px;top:673px;font-size:12px;color:#111;transform:scaleX(0.8800);">V:1221838</span>
<span class="t" style="left:190.78px;top:662px;font-size:12px;color:#111;transform:scaleX(0.8800);">V:972779</span>
<span class="t" style="left:201.64px;top:598px;font-size:12px;color:#111;transform:scaleX(0.8800);">L:3400.50</span>
<span class="t" style="left:209.66px;top:587px;font-size:12px;color:#111;transform:scaleX(0.8800);">H:3461.50</span>
<span class="t" style="left:220.85px;top:576px;font-size:12px;color:#111;transform:scaleX(0.8800);">V:849884</span>
<span class="t" style="left:231.56px;top:569px;font-size:12px;color:#111;transform:scaleX(0.8800);">L:3445.75</span>
<span class="t" style="left:239.18px;top:556px;font-size:12px;color:#111;transform:scaleX(0.8800);">H:3448.00</span>
<span class="t" style="left:586.00px;top:125px;font-size:11px;color:#111;transform:scaleX(0.9604);">L:3930.25</span>
<span class="t" style="left:575.00px;top:131px;font-size:11px;color:#111;transform:scaleX(0.9653);">H:3979.00</span>
<span class="t" style="left:599.00px;top:131px;font-size:11px;color:#111;transform:scaleX(0.9653);">H:3979.00</span>
<div style="left:629px;top:131px;width:9px;height:1px;background:#00f;"></div>
<span class="t" style="left:16.70px;top:204px;font-size:24.7px;color:#000;transform:scaleX(0.8809);">17:18:15</span>
<span class="t" style="left:7.00px;top:825px;font-size:15px;color:#000;transform:scaleX(0.9878);">Cumulative Delta Bars - Volume</span>
<span class="t" style="left:226.50px;top:825px;font-size:15px;color:#00e000;transform:scaleX(0.9300);">Open:</span>
<span class="t" style="left:7.00px;top:912px;font-size:15px;color:#000;">Volume</span>
<span class="t" style="left:66.00px;top:912px;font-size:15px;color:#ff0000;transform:scaleX(0.9677);">Volume: 1285652</span>
<div style="left:1853px;top:126px;width:46px;height:855px;background:#fff;"></div>
<span class="t" style="left:1859.20px;top:147px;font-size:15px;color:#000;transform:scaleX(0.9699);">4000.0</span>
<span class="t" style="left:1859.20px;top:215px;font-size:15px;color:#000;transform:scaleX(0.9699);">3920.0</span>
<span class="t" style="left:1859.20px;top:249px;font-size:15px;color:#000;transform:scaleX(0.9699);">3880.0</span>
<span class="t" style="left:1859.20px;top:283px;font-size:15px;color:#000;transform:scaleX(0.9699);">3840.0</span>
<span class="t" style="left:1859.20px;top:318px;font-size:15px;color:#000;transform:scaleX(0.9699);">3800.0</span>
<span class="t" style="left:1859.20px;top:352px;font-size:15px;color:#000;transform:scaleX(0.9699);">3760.0</span>
<span class="t" style="left:1859.20px;top:386px;font-size:15px;color:#000;transform:scaleX(0.9699);">3720.0</span>
<span class="t" style="left:1859.20px;top:420px;font-size:15px;color:#000;transform:scaleX(0.9699);">3680.0</span>
<span class="t" style="left:1859.20px;top:454px;font-size:15px;color:#000;transform:scaleX(0.9699);">3640.0</span>
<span class="t" style="left:1859.20px;top:488px;font-size:15px;color:#000;transform:scaleX(0.9699);">3600.0</span>
<span class="t" style="left:1859.20px;top:522px;font-size:15px;color:#000;transform:scaleX(0.9699);">3560.0</span>
<span class="t" style="left:1859.20px;top:556px;font-size:15px;color:#000;transform:scaleX(0.9699);">3520.0</span>
<span class="t" style="left:1859.20px;top:590px;font-size:15px;color:#000;transform:scaleX(0.9699);">3480.0</span>
<span class="t" style="left:1859.20px;top:624px;font-size:15px;color:#000;transform:scaleX(0.9699);">3440.0</span>
<span class="t" style="left:1859.20px;top:659px;font-size:15px;color:#000;transform:scaleX(0.9699);">3400.0</span>
<span class="t" style="left:1859.20px;top:693px;font-size:15px;color:#000;transform:scaleX(0.9699);">3360.0</span>
<span class="t" style="left:1859.20px;top:727px;font-size:15px;color:#000;transform:scaleX(0.9699);">3320.0</span>
<span class="t" style="left:1859.20px;top:761px;font-size:15px;color:#000;transform:scaleX(0.9699);">3280.0</span>
<span class="t" style="left:1859.20px;top:795px;font-size:15px;color:#000;transform:scaleX(0.9699);">3240.0</span>
<div style="left:1858px;top:176px;width:41px;height:20px;background:#80ff00;"></div>
<span class="t" style="left:1859.20px;top:179px;font-size:15px;color:#000;transform:scaleX(0.9699);">3962.2</span>
<span class="t" style="left:1859.70px;top:858px;font-size:15px;color:#000;">0</span>
<div style="left:3px;top:958px;width:41px;height:20px;background:#000;overflow:hidden;"><span class="t" style="left:-28.35px;top:3px;font-size:15.5px;color:#fff;transform:scaleX(0.9721)">2020-7-13</span></div>
<div style="left:57px;top:958px;width:32px;height:20px;background:#000;"></div>
<span class="t" style="left:57.85px;top:961px;font-size:15.5px;color:#fff;transform:scaleX(0.9767);">7-23</span>
<div style="left:105px;top:958px;width:32px;height:20px;background:#000;"></div>
<span class="t" style="left:105.85px;top:961px;font-size:15.5px;color:#fff;transform:scaleX(0.9767);">7-31</span>
<div style="left:149px;top:958px;width:24px;height:20px;background:#000;"></div>
<span class="t" style="left:149.90px;top:961px;font-size:15.5px;color:#fff;transform:scaleX(0.9909);">8-7</span>
<div style="left:185px;top:958px;width:32px;height:20px;background:#000;"></div>
<span class="t" style="left:185.85px;top:961px;font-size:15.5px;color:#fff;transform:scaleX(0.9767);">8-14</span>
<div style="left:233px;top:958px;width:32px;height:20px;background:#000;"></div>
<span class="t" style="left:233.85px;top:961px;font-size:15.5px;color:#fff;transform:scaleX(0.9767);">8-24</span>
<div style="left:285px;top:958px;width:24px;height:20px;background:#000;"></div>
<span class="t" style="left:285.90px;top:961px;font-size:15.5px;color:#fff;transform:scaleX(0.9909);">9-1</span>
<div style="left:325px;top:958px;width:24px;height:20px;background:#000;"></div>
<span class="t" style="left:325.90px;top:961px;font-size:15.5px;color:#fff;transform:scaleX(0.9909);">9-8</span>
<div style="left:361px;top:958px;width:32px;height:20px;background:#000;"></div>
<span class="t" style="left:361.85px;top:961px;font-size:15.5px;color:#fff;transform:scaleX(0.9767);">9-15</span>
<div style="left:406px;top:958px;width:70px;height:20px;background:#000;"></div>
<span class="t" style="left:406.65px;top:961px;font-size:15.5px;color:#fff;transform:scaleX(0.9721);">2022-6-17</span>
<div style="left:489px;top:958px;width:32px;height:20px;background:#000;"></div>
<span class="t" style="left:489.85px;top:961px;font-size:15.5px;color:#fff;transform:scaleX(0.9767);">6-29</span>
<div style="left:533px;top:958px;width:24px;height:20px;background:#000;"></div>
<span class="t" style="left:533.90px;top:961px;font-size:15.5px;color:#fff;transform:scaleX(0.9909);">7-6</span>
<div style="left:569px;top:958px;width:32px;height:20px;background:#000;"></div>
<span class="t" style="left:569.85px;top:961px;font-size:15.5px;color:#fff;transform:scaleX(0.9767);">7-13</span>
<div style="left:617px;top:958px;width:32px;height:20px;background:#000;"></div>
<span class="t" style="left:617.85px;top:961px;font-size:15.5px;color:#fff;transform:scaleX(0.9767);">7-21</span>
<div style="left:665px;top:958px;width:32px;height:20px;background:#000;"></div>
<span class="t" style="left:665.85px;top:961px;font-size:15.5px;color:#fff;transform:scaleX(0.9767);">7-29</span>
<div style="left:709px;top:958px;width:24px;height:20px;background:#000;"></div>
<span class="t" style="left:709.90px;top:961px;font-size:15.5px;color:#fff;transform:scaleX(0.9909);">8-3</span>
<div style="left:749px;top:958px;width:24px;height:20px;background:#000;"></div>
<span class="t" style="left:749.90px;top:961px;font-size:15.5px;color:#fff;transform:scaleX(0.9909);">8-8</span>
<div style="left:785px;top:958px;width:32px;height:20px;background:#000;"></div>
<span class="t" style="left:785.85px;top:961px;font-size:15.5px;color:#fff;transform:scaleX(0.9767);">8-13</span>
<div style="left:833px;top:958px;width:32px;height:20px;background:#000;"></div>
<span class="t" style="left:833.85px;top:961px;font-size:15.5px;color:#fff;transform:scaleX(0.9767);">8-19</span>
<div style="left:881px;top:958px;width:32px;height:20px;background:#000;"></div>
<span class="t" style="left:881.85px;top:961px;font-size:15.5px;color:#fff;transform:scaleX(0.9767);">8-25</span>
<div style="left:929px;top:958px;width:32px;height:20px;background:#000;"></div>
<span class="t" style="left:929.85px;top:961px;font-size:15.5px;color:#fff;transform:scaleX(0.9767);">8-31</span>
<div style="left:973px;top:958px;width:24px;height:20px;background:#000;"></div>
<span class="t" style="left:973.90px;top:961px;font-size:15.5px;color:#fff;transform:scaleX(0.9909);">9-5</span>
<div style="left:1009px;top:958px;width:32px;height:20px;background:#000;"></div>
<span class="t" style="left:1009.85px;top:961px;font-size:15.5px;color:#fff;transform:scaleX(0.9767);">9-10</span>
<div style="left:1057px;top:958px;width:32px;height:20px;background:#000;"></div>
<span class="t" style="left:1057.85px;top:961px;font-size:15.5px;color:#fff;transform:scaleX(0.9767);">9-16</span>
<div style="left:1105px;top:958px;width:32px;height:20px;background:#000;"></div>
<span class="t" style="left:1105.85px;top:961px;font-size:15.5px;color:#fff;transform:scaleX(0.9767);">9-22</span>
<div style="left:1153px;top:958px;width:32px;height:20px;background:#000;"></div>
<span class="t" style="left:1153.85px;top:961px;font-size:15.5px;color:#fff;transform:scaleX(0.9767);">9-28</span>
<div style="left:1201px;top:958px;width:32px;height:20px;background:#000;"></div>
<span class="t" style="left:1201.85px;top:961px;font-size:15.5px;color:#fff;transform:scaleX(0.9767);">10-4</span>
<div style="left:1245px;top:958px;width:40px;height:20px;background:#000;"></div>
<span class="t" style="left:1245.80px;top:961px;font-size:15.5px;color:#fff;transform:scaleX(0.9686);">10-10</span>
<div style="left:1301px;top:958px;width:40px;height:20px;background:#000;"></div>
<span class="t" style="left:1301.80px;top:961px;font-size:15.5px;color:#fff;transform:scaleX(0.9686);">10-17</span>
<div style="left:1357px;top:958px;width:40px;height:20px;background:#000;"></div>
<span class="t" style="left:1357.80px;top:961px;font-size:15.5px;color:#fff;transform:scaleX(0.9686);">10-24</span>
<div style="left:1413px;top:958px;width:40px;height:20px;background:#000;"></div>
<span class="t" style="left:1413.80px;top:961px;font-size:15.5px;color:#fff;transform:scaleX(0.9686);">10-31</span>
<div style="left:1465px;top:958px;width:32px;height:20px;background:#000;"></div>
<span class="t" style="left:1465.85px;top:961px;font-size:15.5px;color:#fff;transform:scaleX(1.0143);">11-6</span>
<div style="left:1509px;top:958px;width:40px;height:20px;background:#000;"></div>
<span class="t" style="left:1509.80px;top:961px;font-size:15.5px;color:#fff;transform:scaleX(0.9975);">11-12</span>
<div style="left:1565px;top:958px;width:40px;height:20px;background:#000;"></div>
<span class="t" style="left:1565.80px;top:961px;font-size:15.5px;color:#fff;transform:scaleX(0.9975);">11-19</span>
<div style="left:1621px;top:958px;width:40px;height:20px;background:#000;"></div>
<span class="t" style="left:1621.80px;top:961px;font-size:15.5px;color:#fff;transform:scaleX(0.9975);">11-26</span>
<div style="left:1673px;top:958px;width:32px;height:20px;background:#000;"></div>
<span class="t" style="left:1673.85px;top:961px;font-size:15.5px;color:#fff;transform:scaleX(0.9767);">12-2</span>
<div style="left:1721px;top:958px;width:32px;height:20px;background:#000;"></div>
<span class="t" style="left:1721.85px;top:961px;font-size:15.5px;color:#fff;transform:scaleX(0.9767);">12-8</span>
<div style="left:1765px;top:958px;width:40px;height:20px;background:#000;"></div>
<span class="t" style="left:1765.80px;top:961px;font-size:15.5px;color:#fff;transform:scaleX(0.9686);">12-14</span>
<div style="left:1821px;top:958px;width:40px;height:20px;background:#000;"></div>
<span class="t" style="left:1821.80px;top:961px;font-size:15.5px;color:#fff;transform:scaleX(0.9686);">12-21</span>
<div style="left:0px;top:980px;width:1899px;height:21px;background:#f0f0f0;"></div>
<div style="left:1px;top:980px;width:1px;height:21px;background:#696969;"></div>
<div style="left:0px;top:980px;width:1px;height:21px;background:#a0a0a0;"></div>
<svg style="left:7px;top:984px" width="10" height="12" viewBox="0 0 10 12"><path d="M8 1.5L2 5.8L8 10" stroke="#c0c0c0" stroke-width="1.5" fill="none"/></svg>
<div style="left:0px;top:1001px;width:1899px;height:28px;background:#f0f0f0;"></div>
<div style="left:0px;top:1001px;width:1899px;height:1px;background:#e3e3e3;"></div>
<div style="left:232px;top:1003px;width:67px;height:26px;background:#0078d7;"></div>
<div style="left:232px;top:1003px;width:1px;height:26px;background:#5a6f85;"></div>
<div style="left:76px;top:1003px;width:1px;height:26px;background:#a0a0a0;"></div>
<div style="left:231px;top:1003px;width:1px;height:26px;background:#a0a0a0;"></div>
<div style="left:575px;top:1003px;width:1px;height:26px;background:#a0a0a0;"></div>
<div style="left:806px;top:1003px;width:1px;height:26px;background:#a0a0a0;"></div>
<div style="left:878px;top:1003px;width:1px;height:26px;background:#a0a0a0;"></div>
<span class="t" style="left:5.00px;top:1009px;font-size:15px;color:#000;transform:scaleX(0.9641);">Daily - yes</span>
<span class="t" style="left:81.70px;top:1009px;font-size:15px;color:#000;transform:scaleX(0.9716);">Daily_without NS - yes</span>
<span class="t" style="left:237.60px;top:1009px;font-size:15px;color:#fff;transform:scaleX(0.9416);">24h - yes</span>
<span class="t" style="left:305.50px;top:1009px;font-size:15px;color:#000;transform:scaleX(0.9622);">15 MIN - yes - 2 week VPOC - blue levels</span>
<span class="t" style="left:581.00px;top:1009px;font-size:15px;color:#000;transform:scaleX(0.9702);">5 MIN Full session - yellow swings</span>
<span class="t" style="left:811.80px;top:1009px;font-size:15px;color:#000;transform:scaleX(0.9805);">Trigger24</span>
<div style="left:267px;top:138px;width:1338px;height:702px;background:#f0f0f0;box-shadow:0 4px 21px rgba(0,0,0,0.42);border:1px solid #5c5c5c;box-sizing:border-box;"></div>
<div style="left:268px;top:139px;width:1336px;height:84px;background:#fff;"></div>
<svg style="left:277px;top:149px" width="19" height="16" viewBox="0 0 19 16"><defs><linearGradient id="wib" x1="0" y1="0" x2="0.4" y2="1"><stop offset="0" stop-color="#4f86a8"/><stop offset="1" stop-color="#4ba05a"/></linearGradient></defs><rect x="0.5" y="0.5" width="17.5" height="14.2" fill="#f3f5f7" stroke="#a3aab4"/><rect x="0" y="0" width="18.5" height="1.1" fill="#80868e"/><rect x="2" y="3.3" width="6.2" height="9.5" fill="url(#wib)"/><rect x="10" y="3.5" width="4" height="2" fill="#e2e5e8"/><rect x="10" y="7" width="4" height="2" fill="#e6e8ea"/><rect x="10" y="10.5" width="4" height="2" fill="#e9ebed"/><rect x="15.5" y="3" width="1.4" height="6" fill="#4a8aa0"/></svg>
<span class="t" style="left:302.00px;top:150px;font-size:15px;color:#000;transform:scaleX(0.9370);">Chart Settings | ESU2.CME/MESU2.CME [CBV][M]  1 Day   #20 | E-MINI S&amp;P 500 FUTURES ES Sep 2022</span>
<svg style="left:1440px;top:139px" width="160" height="36" viewBox="0 0 160 36"><g stroke="#000" stroke-width="1.1" fill="none"><path d="M11 17.5H23" stroke="#c8c8c8"/><path d="M69.5 12.5h11v11h-11z"/><path d="M128 12L140 24M140 12L128 24"/></g></svg>
<span class="t" style="left:276.00px;top:181px;font-size:15px;color:#000;transform:scaleX(0.9939);">[Symbol]</span>
<span class="t" style="left:350.00px;top:181px;font-size:15px;color:#000;transform:scaleX(1.0323);">[*Data Limiting]</span>
<span class="t" style="left:470.00px;top:181px;font-size:15px;color:#000;transform:scaleX(0.9721);">[Bar Period]</span>
<span class="t" style="left:562.00px;top:181px;font-size:15px;color:#000;transform:scaleX(0.9540);">[Session Times]</span>
<span class="t" style="left:678.00px;top:181px;font-size:15px;color:#000;transform:scaleX(1.0084);">[Display]</span>
<span class="t" style="left:751.00px;top:181px;font-size:15px;color:#000;transform:scaleX(1.0089);">[Grid]</span>
<span class="t" style="left:803.00px;top:181px;font-size:15px;color:#000;transform:scaleX(1.0061);">[Trading]</span>
<span class="t" style="left:877.00px;top:181px;font-size:15px;color:#000;transform:scaleX(1.0023);">[Linking]</span>
<span class="t" style="left:948.00px;top:181px;font-size:15px;color:#000;transform:scaleX(0.9595);">[Scale]</span>
<span class="t" style="left:1007.00px;top:181px;font-size:15px;color:#000;transform:scaleX(0.9784);">[Regions]</span>
<span class="t" style="left:1084.00px;top:181px;font-size:15px;color:#000;transform:scaleX(1.0165);">[Market Depth]</span>
<span class="t" style="left:1199.00px;top:181px;font-size:15px;color:#000;transform:scaleX(0.9847);">[Chart Drawings]</span>
<span class="t" style="left:1324.00px;top:181px;font-size:15px;color:#000;transform:scaleX(0.9893);">[Chart Data]</span>
<span class="t" style="left:1419.00px;top:181px;font-size:15px;color:#000;transform:scaleX(0.9766);">[Performance]</span>
<span class="t" style="left:1526.00px;top:181px;font-size:15px;color:#000;transform:scaleX(1.0465);">[Alert]</span>
<span class="t" style="left:275.60px;top:205px;font-size:15px;color:#000;transform:scaleX(0.9739);">View</span>
<div style="left:278px;top:225px;width:1315px;height:27px;background:#fff;border:1px solid #a0a0a0;border-right-color:#fff;border-bottom-color:#fff;box-sizing:border-box;"></div>
<div style="left:279px;top:226px;width:1313px;height:25px;background:#fff;border:1px solid #696969;border-right-color:#e3e3e3;border-bottom-color:#e3e3e3;box-sizing:border-box;"></div>
<span class="t" style="left:285.70px;top:231px;font-size:15px;color:#000;transform:scaleX(0.9457);">Enter Search Text</span>
<div style="left:1571px;top:227px;width:21px;height:23px;background:#f0f0f0;border:1px solid #fff;border-right-color:#696969;border-bottom-color:#696969;box-sizing:border-box;box-shadow:inset -1px -1px 0 #a0a0a0;"></div>
<svg style="left:1576px;top:235px" width="12" height="8" viewBox="0 0 12 8"><path d="M1 1.5h9L5.5 6.5z" fill="#000"/></svg>
<div style="left:278px;top:265px;width:1316px;height:524px;background:#808080;border-left:1px solid #696969;border-top:1px solid #696969;box-sizing:border-box;"></div>
<div style="left:279px;top:266px;width:1314px;height:30px;background:#f0f0f0;"></div>
<div style="left:864px;top:266px;width:1px;height:30px;background:#a0a0a0;"></div>
<div style="left:1215px;top:266px;width:1px;height:30px;background:#a0a0a0;"></div>
<div style="left:1355px;top:266px;width:1px;height:30px;background:#a0a0a0;"></div>
<span class="t" style="left:284.40px;top:274px;font-size:15px;color:#000;transform:scaleX(0.9925);">Setting Name</span>
<span class="t" style="left:869.00px;top:274px;font-size:15px;color:#000;transform:scaleX(0.9664);">Value</span>
<span class="t" style="left:1220.00px;top:274px;font-size:15px;color:#000;">Original Value</span>
<div style="left:279px;top:297px;width:1314px;height:492px;background:#000;"></div>
<div style="left:279px;top:320px;width:1314px;height:1px;background:#808080;"></div>
<div style="left:279px;top:297px;width:1076px;height:23px;background:#808080;"></div>
<span class="t" style="left:283.00px;top:301px;font-size:15px;color:#e8e8e8;transform:scaleX(1.0077);">Date Range and Limiting Method</span>
<div style="left:279px;top:344px;width:1314px;height:1px;background:#808080;"></div>
<div style="left:864px;top:321px;width:1px;height:23px;background:#808080;"></div>
<div style="left:1215px;top:321px;width:1px;height:23px;background:#808080;"></div>
<div style="left:1355px;top:321px;width:1px;height:23px;background:#808080;"></div>
<span class="t" style="left:283.00px;top:325px;font-size:15px;color:#ffffff;transform:scaleX(0.9683);">Date Range In File From (YYYY-MM-DD)</span>
<span class="t" style="left:867.60px;top:325px;font-size:15px;color:#fff;transform:scaleX(0.9905);">2022-05-31</span>
<div style="left:279px;top:368px;width:1314px;height:1px;background:#808080;"></div>
<div style="left:864px;top:345px;width:1px;height:23px;background:#808080;"></div>
<div style="left:1215px;top:345px;width:1px;height:23px;background:#808080;"></div>
<div style="left:1355px;top:345px;width:1px;height:23px;background:#808080;"></div>
<span class="t" style="left:283.00px;top:349px;font-size:15px;color:#808080;transform:scaleX(0.9697);">Date Range In File To (YYYY-MM-DD) (Read Only)</span>
<span class="t" style="left:867.60px;top:349px;font-size:15px;color:#fff;transform:scaleX(0.9905);">2022-07-25</span>
<div style="left:279px;top:392px;width:1314px;height:1px;background:#808080;"></div>
<div style="left:864px;top:369px;width:1px;height:23px;background:#808080;"></div>
<div style="left:1215px;top:369px;width:1px;height:23px;background:#808080;"></div>
<div style="left:1355px;top:369px;width:1px;height:23px;background:#808080;"></div>
<span class="t" style="left:283.00px;top:373px;font-size:15px;color:#ffffff;transform:scaleX(0.9696);">Chart Data Type (List)</span>
<span class="t" style="left:867.60px;top:373px;font-size:15px;color:#fff;transform:scaleX(0.9784);">Intraday Chart</span>
<div style="left:279px;top:416px;width:1314px;height:1px;background:#808080;"></div>
<div style="left:279px;top:440px;width:1314px;height:1px;background:#808080;"></div>
<div style="left:864px;top:417px;width:1px;height:23px;background:#808080;"></div>
<div style="left:1215px;top:417px;width:1px;height:23px;background:#808080;"></div>
<div style="left:1355px;top:417px;width:1px;height:23px;background:#808080;"></div>
<span class="t" style="left:283.00px;top:421px;font-size:15px;color:#ffffff;transform:scaleX(1.0102);">Load Data Limiting Method (List)</span>
<span class="t" style="left:867.60px;top:421px;font-size:15px;color:#fff;transform:scaleX(0.9558);">Use Date Range</span>
<div style="left:279px;top:464px;width:1314px;height:1px;background:#808080;"></div>
<div style="left:279px;top:488px;width:1314px;height:1px;background:#808080;"></div>
<div style="left:279px;top:465px;width:1076px;height:23px;background:#808080;"></div>
<span class="t" style="left:283.00px;top:469px;font-size:15px;color:#e8e8e8;transform:scaleX(1.0036);">Load Data Limiting Method: Days to Load</span>
<div style="left:279px;top:512px;width:1314px;height:1px;background:#808080;"></div>
<div style="left:864px;top:489px;width:1px;height:23px;background:#808080;"></div>
<div style="left:1215px;top:489px;width:1px;height:23px;background:#808080;"></div>
<div style="left:1355px;top:489px;width:1px;height:23px;background:#808080;"></div>
<span class="t" style="left:283.00px;top:493px;font-size:15px;color:#808080;transform:scaleX(0.9793);">Days To Load for Intraday Chart Data Type (Read Only)</span>
<span class="t" style="left:867.60px;top:493px;font-size:15px;color:#fff;transform:scaleX(0.7192);">1</span>
<div style="left:279px;top:536px;width:1314px;height:1px;background:#808080;"></div>
<div style="left:864px;top:513px;width:1px;height:23px;background:#808080;"></div>
<div style="left:1215px;top:513px;width:1px;height:23px;background:#808080;"></div>
<div style="left:1355px;top:513px;width:1px;height:23px;background:#808080;"></div>
<span class="t" style="left:283.00px;top:517px;font-size:15px;color:#808080;transform:scaleX(0.9838);">Days To Load for Historical Chart Data Type (Read Only)</span>
<span class="t" style="left:867.60px;top:517px;font-size:15px;color:#fff;transform:scaleX(0.9589);">4380</span>
<div style="left:279px;top:560px;width:1314px;height:1px;background:#808080;"></div>
<div style="left:864px;top:537px;width:1px;height:23px;background:#808080;"></div>
<div style="left:1215px;top:537px;width:1px;height:23px;background:#808080;"></div>
<div style="left:1355px;top:537px;width:1px;height:23px;background:#808080;"></div>
<span class="t" style="left:283.00px;top:541px;font-size:15px;color:#808080;transform:scaleX(0.9907);">Adjust Proportional With Bar Period (Read Only)</span>
<span class="t" style="left:867.60px;top:541px;font-size:15px;color:#00e000;transform:scaleX(0.8582);">Yes</span>
<div style="left:279px;top:584px;width:1314px;height:1px;background:#808080;"></div>
<div style="left:279px;top:608px;width:1314px;height:1px;background:#808080;"></div>
<div style="left:279px;top:585px;width:1076px;height:23px;background:#808080;"></div>
<span class="t" style="left:283.00px;top:589px;font-size:15px;color:#e8e8e8;">Load Data Limiting Method: Date Range</span>
<div style="left:279px;top:632px;width:1314px;height:1px;background:#808080;"></div>
<div style="left:864px;top:609px;width:1px;height:23px;background:#808080;"></div>
<div style="left:1215px;top:609px;width:1px;height:23px;background:#808080;"></div>
<div style="left:1355px;top:609px;width:1px;height:23px;background:#808080;"></div>
<span class="t" style="left:283.00px;top:613px;font-size:15px;color:#ffffff;transform:scaleX(0.9708);">Date Range From (YYYY-MM-DD)</span>
<span class="t" style="left:867.60px;top:613px;font-size:15px;color:#fff;transform:scaleX(0.9905);">2020-07-13</span>
<div style="left:279px;top:656px;width:1314px;height:1px;background:#808080;"></div>
<div style="left:864px;top:633px;width:1px;height:23px;background:#808080;"></div>
<div style="left:1215px;top:633px;width:1px;height:23px;background:#808080;"></div>
<div style="left:1355px;top:633px;width:1px;height:23px;background:#808080;"></div>
<span class="t" style="left:283.00px;top:637px;font-size:15px;color:#ffffff;transform:scaleX(0.9749);">Date Range To (YYYY-MM-DD)</span>
<div style="left:279px;top:680px;width:1314px;height:1px;background:#808080;"></div>
<div style="left:279px;top:704px;width:1314px;height:1px;background:#808080;"></div>
<div style="left:279px;top:681px;width:1076px;height:23px;background:#808080;"></div>
<span class="t" style="left:283.00px;top:685px;font-size:15px;color:#e8e8e8;transform:scaleX(0.9870);">Volume Filter Settings</span>
<div style="left:279px;top:728px;width:1314px;height:1px;background:#808080;"></div>
<div style="left:864px;top:705px;width:1px;height:23px;background:#808080;"></div>
<div style="left:1215px;top:705px;width:1px;height:23px;background:#808080;"></div>
<div style="left:1355px;top:705px;width:1px;height:23px;background:#808080;"></div>
<span class="t" style="left:283.00px;top:709px;font-size:15px;color:#ffffff;">Exclude &gt;=</span>
<span class="t" style="left:867.60px;top:709px;font-size:15px;color:#fff;transform:scaleX(0.8391);">0</span>
<div style="left:279px;top:752px;width:1314px;height:1px;background:#808080;"></div>
<div style="left:864px;top:729px;width:1px;height:23px;background:#808080;"></div>
<div style="left:1215px;top:729px;width:1px;height:23px;background:#808080;"></div>
<div style="left:1355px;top:729px;width:1px;height:23px;background:#808080;"></div>
<span class="t" style="left:283.00px;top:733px;font-size:15px;color:#ffffff;">Exclude &lt;=</span>
<span class="t" style="left:867.60px;top:733px;font-size:15px;color:#fff;transform:scaleX(0.8391);">0</span>
<div style="left:279px;top:776px;width:1314px;height:1px;background:#808080;"></div>
<div style="left:864px;top:753px;width:1px;height:23px;background:#808080;"></div>
<div style="left:1215px;top:753px;width:1px;height:23px;background:#808080;"></div>
<div style="left:1355px;top:753px;width:1px;height:23px;background:#808080;"></div>
<span class="t" style="left:283.00px;top:757px;font-size:15px;color:#ffffff;transform:scaleX(0.9932);">Filter Trade Completely</span>
<span class="t" style="left:867.60px;top:757px;font-size:15px;color:#fff;transform:scaleX(1.0430);">No</span>
<div style="left:278px;top:789px;width:263px;height:40px;background:#f0f0f0;border:1px solid #fff;border-right-color:#696969;border-bottom-color:#696969;box-sizing:border-box;box-shadow:inset -1px -1px 0 #a0a0a0;"></div>
<span class="t" style="left:399.10px;top:801px;font-size:15px;color:#000;transform:scaleX(0.9600);">OK</span>
<div style="left:541px;top:789px;width:263px;height:40px;background:#f0f0f0;border:1px solid #fff;border-right-color:#696969;border-bottom-color:#696969;box-sizing:border-box;box-shadow:inset -1px -1px 0 #a0a0a0;"></div>
<span class="t" style="left:649.59px;top:801px;font-size:15px;color:#000;transform:scaleX(0.9600);">Cancel</span>
<div style="left:804px;top:789px;width:263px;height:40px;background:#f0f0f0;border:1px solid #fff;border-right-color:#696969;border-bottom-color:#696969;box-sizing:border-box;box-shadow:inset -1px -1px 0 #a0a0a0;"></div>
<span class="t" style="left:920.19px;top:801px;font-size:15px;color:#000;transform:scaleX(0.9600);">Help</span>
<div style="left:1067px;top:789px;width:263px;height:40px;background:#f0f0f0;border:1px solid #fff;border-right-color:#696969;border-bottom-color:#696969;box-sizing:border-box;box-shadow:inset -1px -1px 0 #a0a0a0;"></div>
<span class="t" style="left:1167.19px;top:801px;font-size:15px;color:#000;transform:scaleX(0.9600);">Revert All</span>
<div style="left:1330px;top:789px;width:263px;height:40px;background:#f0f0f0;border:1px solid #fff;border-right-color:#696969;border-bottom-color:#696969;box-sizing:border-box;box-shadow:inset -1px -1px 0 #a0a0a0;"></div>
<span class="t" style="left:1433.38px;top:801px;font-size:15px;color:#000;transform:scaleX(0.9600);">Apply All</span>
</body></html>
